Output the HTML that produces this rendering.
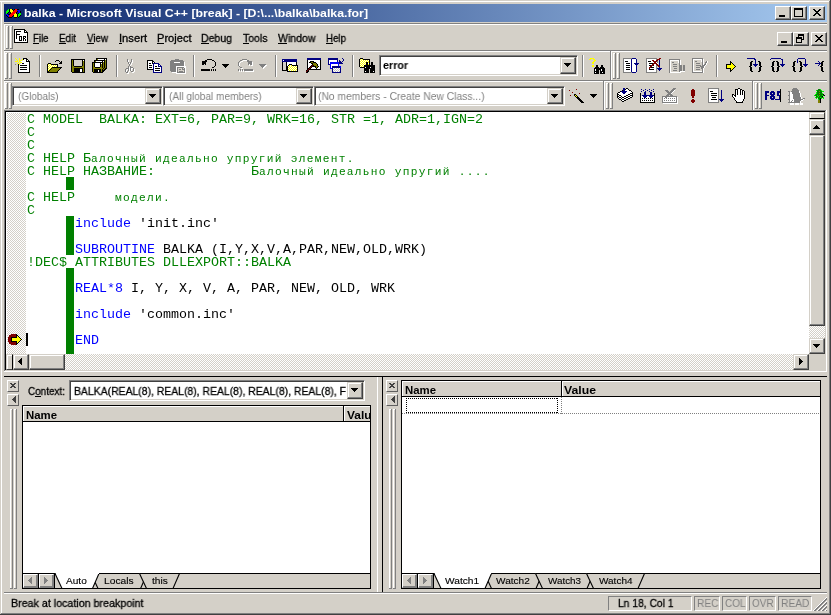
<!DOCTYPE html>
<html><head><meta charset="utf-8"><title>balka - Microsoft Visual C++</title>
<style>
*{box-sizing:border-box;margin:0;padding:0}
html,body{width:831px;height:615px;overflow:hidden;background:#d4d0c8}
body{position:relative;font-family:"Liberation Sans",sans-serif;font-size:11px;color:#000}
.a{position:absolute}
.hl{position:absolute;height:1px}
.vl{position:absolute;width:1px}
.t{position:absolute;white-space:pre;line-height:13px;height:13px;transform-origin:0 0;will-change:transform}
.btn{position:absolute;background:#d4d0c8;border:1px solid;border-color:#fff #404040 #404040 #fff;box-shadow:inset -1px -1px #808080,inset 1px 1px #d4d0c8}
.sbtn{position:absolute;background:#d4d0c8;border:1px solid;border-color:#d4d0c8 #404040 #404040 #d4d0c8;box-shadow:inset -1px -1px #808080,inset 1px 1px #fff}
.sunk{position:absolute;border:1px solid;border-color:#808080 #fff #fff #808080;box-shadow:inset 1px 1px #404040,inset -1px -1px #d4d0c8;background:#fff}
.dith{background:repeating-conic-gradient(#d4d0c8 0 25%,#fff 0 50%) 0 0/2px 2px}
.dith2{background:repeating-conic-gradient(#fff 0 25%,#d4d0c8 0 50%) 0 0/2px 2px}
.code{position:absolute;font-family:"Liberation Mono",monospace;font-size:13.333px;line-height:13px;height:13px;white-space:pre;will-change:transform}
.g{color:#008000}.b{color:#0000ff}
.cy{font-size:11.2px;letter-spacing:1.279px}
svg{position:absolute;shape-rendering:crispEdges;overflow:visible}
</style></head>
<body>
<div class="hl" style="left:0px;top:1px;width:830px;background:#ffffff"></div>
<div class="vl" style="left:1px;top:1px;height:613px;background:#ffffff"></div>
<div class="hl" style="left:1px;top:613px;width:829px;background:#808080"></div>
<div class="vl" style="left:829px;top:1px;height:613px;background:#808080"></div>
<div class="hl" style="left:0px;top:614px;width:831px;background:#404040"></div>
<div class="vl" style="left:830px;top:0px;height:615px;background:#404040"></div>
<div class="a" style="left:4px;top:4px;width:823px;height:18px;background:linear-gradient(to right,#0a246a,#a6caf0);"></div>
<svg style="left:6px;top:9px" width="15" height="9" viewBox="0 0 15 9"><path fill="#00ff00" d="M2 0h1v1h-1zM1 1h2v1h-2zM0 2h3v1h-3zM0 3h2v1h-2zM0 4h1v1h-1zM13 4h2v1h-2zM12 5h3v1h-3zM12 6h2v1h-2zM12 7h1v1h-1z"/><path fill="#000000" d="M3 0h1v1h-1zM6 0h1v1h-1zM8 0h1v1h-1zM11 0h2v1h-2zM3 1h1v1h-1zM7 1h1v1h-1zM3 2h1v1h-1zM11 2h1v1h-1zM14 2h1v1h-1zM2 3h1v1h-1zM4 3h1v1h-1zM10 3h1v1h-1zM14 3h1v1h-1zM1 4h1v1h-1zM4 4h1v1h-1zM10 4h1v1h-1zM12 4h1v1h-1zM2 5h2v1h-2zM11 5h1v1h-1zM0 6h1v1h-1zM7 6h1v1h-1zM11 6h1v1h-1zM14 6h1v1h-1zM1 7h1v1h-1zM6 7h1v1h-1zM11 7h1v1h-1zM13 7h1v1h-1zM2 8h4v1h-4zM8 8h3v1h-3zM12 8h1v1h-1z"/><path fill="#ffff00" d="M4 0h2v1h-2zM4 1h3v1h-3zM4 2h3v1h-3zM5 3h1v1h-1zM9 4h1v1h-1zM8 5h3v1h-3zM8 6h3v1h-3zM8 7h3v1h-3z"/><path fill="#ff0000" d="M9 0h2v1h-2zM8 1h3v1h-3zM7 2h4v1h-4zM6 3h4v1h-4zM5 4h4v1h-4zM4 5h4v1h-4zM3 6h4v1h-4zM3 7h3v1h-3z"/><path fill="#0000ff" d="M11 1h3v1h-3zM12 2h2v1h-2zM12 3h2v1h-2zM0 5h2v1h-2zM1 6h2v1h-2zM2 7h1v1h-1z"/></svg>
<div class="t" style="left:24.00px;top:6px;font-family:'Liberation Sans';font-size:11px;color:#fff;line-height:14px;height:14px;transform:scaleX(1.1195);font-weight:bold;">balka - Microsoft Visual C++ [break] - [D:\...\balka\balka.for]</div>
<div class="btn" style="left:775px;top:6px;width:16px;height:14px"></div>
<svg style="left:775px;top:6px" width="16" height="11" viewBox="0 0 16 11"><path fill="#000000" d="M4 9h6v1h-6zM4 10h6v1h-6z"/></svg>
<div class="btn" style="left:791px;top:6px;width:16px;height:14px"></div>
<svg style="left:791px;top:6px" width="16" height="11" viewBox="0 0 16 11"><path fill="#000000" d="M3 2h9v1h-9zM3 3h9v1h-9zM3 4h1v1h-1zM11 4h1v1h-1zM3 5h1v1h-1zM11 5h1v1h-1zM3 6h1v1h-1zM11 6h1v1h-1zM3 7h1v1h-1zM11 7h1v1h-1zM3 8h1v1h-1zM11 8h1v1h-1zM3 9h1v1h-1zM11 9h1v1h-1zM3 10h9v1h-9z"/></svg>
<div class="btn" style="left:809px;top:6px;width:16px;height:14px"></div>
<svg style="left:809px;top:6px" width="16" height="10" viewBox="0 0 16 10"><path fill="#000000" d="M4 3h2v1h-2zM10 3h2v1h-2zM5 4h2v1h-2zM9 4h2v1h-2zM6 5h4v1h-4zM7 6h2v1h-2zM6 7h4v1h-4zM5 8h2v1h-2zM9 8h2v1h-2zM4 9h2v1h-2zM10 9h2v1h-2z"/></svg>
<div class="hl" style="left:4px;top:23px;width:823px;background:#808080"></div>
<div class="hl" style="left:4px;top:24px;width:823px;background:#ffffff"></div>
<div class="vl" style="left:4px;top:24px;height:85px;background:#ffffff"></div>
<div class="vl" style="left:6px;top:26px;height:23px;background:#ffffff"></div>
<div class="vl" style="left:7px;top:26px;height:23px;background:#d4d0c8"></div>
<div class="vl" style="left:8px;top:26px;height:23px;background:#808080"></div>
<div class="hl" style="left:6px;top:26px;width:2px;background:#ffffff"></div>
<div class="hl" style="left:6px;top:48px;width:3px;background:#808080"></div>
<div class="vl" style="left:10px;top:26px;height:23px;background:#ffffff"></div>
<div class="vl" style="left:11px;top:26px;height:23px;background:#d4d0c8"></div>
<div class="vl" style="left:12px;top:26px;height:23px;background:#808080"></div>
<div class="hl" style="left:10px;top:26px;width:2px;background:#ffffff"></div>
<div class="hl" style="left:10px;top:48px;width:3px;background:#808080"></div>
<svg style="left:14px;top:29px" width="14" height="14" viewBox="0 0 14 14"><path fill="#000000" d="M0 0h11v1h-11zM0 1h1v1h-1zM10 1h2v1h-2zM0 2h1v1h-1zM2 2h5v1h-5zM10 2h1v1h-1zM12 2h1v1h-1zM0 3h1v1h-1zM2 3h1v1h-1zM10 3h4v1h-4zM0 4h1v1h-1zM2 4h1v1h-1zM13 4h1v1h-1zM0 5h1v1h-1zM2 5h4v1h-4zM13 5h1v1h-1zM0 6h1v1h-1zM2 6h1v1h-1zM13 6h1v1h-1zM0 7h1v1h-1zM2 7h1v1h-1zM5 7h3v1h-3zM9 7h3v1h-3zM13 7h1v1h-1zM0 8h1v1h-1zM2 8h1v1h-1zM5 8h1v1h-1zM7 8h1v1h-1zM9 8h1v1h-1zM11 8h1v1h-1zM13 8h1v1h-1zM0 9h1v1h-1zM2 9h1v1h-1zM5 9h1v1h-1zM7 9h1v1h-1zM9 9h2v1h-2zM13 9h1v1h-1zM0 10h1v1h-1zM5 10h1v1h-1zM7 10h1v1h-1zM9 10h1v1h-1zM11 10h1v1h-1zM13 10h1v1h-1zM0 11h1v1h-1zM5 11h3v1h-3zM9 11h1v1h-1zM11 11h1v1h-1zM13 11h1v1h-1zM0 12h1v1h-1zM13 12h1v1h-1zM0 13h14v1h-14z"/><path fill="#ffffff" d="M1 1h9v1h-9zM1 2h1v1h-1zM7 2h3v1h-3zM11 2h1v1h-1zM1 3h1v1h-1zM3 3h7v1h-7zM1 4h1v1h-1zM3 4h10v1h-10zM1 5h1v1h-1zM6 5h7v1h-7zM1 6h1v1h-1zM3 6h10v1h-10zM1 7h1v1h-1zM3 7h2v1h-2zM8 7h1v1h-1zM12 7h1v1h-1zM1 8h1v1h-1zM3 8h2v1h-2zM6 8h1v1h-1zM8 8h1v1h-1zM10 8h1v1h-1zM12 8h1v1h-1zM1 9h1v1h-1zM3 9h2v1h-2zM6 9h1v1h-1zM8 9h1v1h-1zM11 9h2v1h-2zM1 10h4v1h-4zM6 10h1v1h-1zM8 10h1v1h-1zM10 10h1v1h-1zM12 10h1v1h-1zM1 11h4v1h-4zM8 11h1v1h-1zM10 11h1v1h-1zM12 11h1v1h-1zM1 12h12v1h-12z"/></svg>
<div class="t" style="left:33.00px;top:32px;font-family:'Liberation Sans';font-size:11px;color:#000;line-height:13px;height:13px;transform:scaleX(0.8739);-webkit-text-stroke:0.3px;">File</div>
<div class="hl" style="left:33px;top:43px;width:6px;background:#000"></div>
<div class="t" style="left:59.00px;top:32px;font-family:'Liberation Sans';font-size:11px;color:#000;line-height:13px;height:13px;transform:scaleX(0.8972);-webkit-text-stroke:0.3px;">Edit</div>
<div class="hl" style="left:59px;top:43px;width:7px;background:#000"></div>
<div class="t" style="left:87.00px;top:32px;font-family:'Liberation Sans';font-size:11px;color:#000;line-height:13px;height:13px;transform:scaleX(0.8869);-webkit-text-stroke:0.3px;">View</div>
<div class="hl" style="left:87px;top:43px;width:7px;background:#000"></div>
<div class="t" style="left:119.00px;top:32px;font-family:'Liberation Sans';font-size:11px;color:#000;line-height:13px;height:13px;transform:scaleX(1.0182);-webkit-text-stroke:0.3px;">Insert</div>
<div class="hl" style="left:119px;top:43px;width:3px;background:#000"></div>
<div class="t" style="left:157.00px;top:32px;font-family:'Liberation Sans';font-size:11px;color:#000;line-height:13px;height:13px;transform:scaleX(1.0077);-webkit-text-stroke:0.3px;">Project</div>
<div class="hl" style="left:157px;top:43px;width:7px;background:#000"></div>
<div class="t" style="left:201.00px;top:32px;font-family:'Liberation Sans';font-size:11px;color:#000;line-height:13px;height:13px;transform:scaleX(0.9561);-webkit-text-stroke:0.3px;">Debug</div>
<div class="hl" style="left:201px;top:43px;width:8px;background:#000"></div>
<div class="t" style="left:243.00px;top:32px;font-family:'Liberation Sans';font-size:11px;color:#000;line-height:13px;height:13px;transform:scaleX(0.9539);-webkit-text-stroke:0.3px;">Tools</div>
<div class="hl" style="left:243px;top:43px;width:6px;background:#000"></div>
<div class="t" style="left:277.50px;top:32px;font-family:'Liberation Sans';font-size:11px;color:#000;line-height:13px;height:13px;transform:scaleX(0.9576);-webkit-text-stroke:0.3px;">Window</div>
<div class="hl" style="left:278px;top:43px;width:9px;background:#000"></div>
<div class="t" style="left:326.00px;top:32px;font-family:'Liberation Sans';font-size:11px;color:#000;line-height:13px;height:13px;transform:scaleX(0.8837);-webkit-text-stroke:0.3px;">Help</div>
<div class="hl" style="left:326px;top:43px;width:7px;background:#000"></div>
<div class="btn" style="left:777px;top:32px;width:16px;height:14px"></div>
<svg style="left:777px;top:32px" width="16" height="11" viewBox="0 0 16 11"><path fill="#000000" d="M4 9h6v1h-6zM4 10h6v1h-6z"/></svg>
<div class="btn" style="left:793px;top:32px;width:16px;height:14px"></div>
<svg style="left:793px;top:32px" width="16" height="11" viewBox="0 0 16 11"><path fill="#000000" d="M5 2h6v1h-6zM5 3h6v1h-6zM5 4h1v1h-1zM10 4h1v1h-1zM3 5h6v1h-6zM10 5h1v1h-1zM3 6h6v1h-6zM10 6h1v1h-1zM3 7h1v1h-1zM8 7h3v1h-3zM3 8h1v1h-1zM8 8h1v1h-1zM3 9h1v1h-1zM8 9h1v1h-1zM3 10h6v1h-6z"/></svg>
<div class="btn" style="left:811px;top:32px;width:16px;height:14px"></div>
<svg style="left:811px;top:32px" width="16" height="10" viewBox="0 0 16 10"><path fill="#000000" d="M4 3h2v1h-2zM10 3h2v1h-2zM5 4h2v1h-2zM9 4h2v1h-2zM6 5h4v1h-4zM7 6h2v1h-2zM6 7h4v1h-4zM5 8h2v1h-2zM9 8h2v1h-2zM4 9h2v1h-2zM10 9h2v1h-2z"/></svg>
<div class="hl" style="left:4px;top:50px;width:823px;background:#808080"></div>
<div class="hl" style="left:4px;top:51px;width:823px;background:#ffffff"></div>
<div class="vl" style="left:5px;top:53px;height:26px;background:#ffffff"></div>
<div class="vl" style="left:6px;top:53px;height:26px;background:#d4d0c8"></div>
<div class="vl" style="left:7px;top:53px;height:26px;background:#808080"></div>
<div class="hl" style="left:5px;top:53px;width:2px;background:#ffffff"></div>
<div class="hl" style="left:5px;top:78px;width:3px;background:#808080"></div>
<div class="vl" style="left:9px;top:53px;height:26px;background:#ffffff"></div>
<div class="vl" style="left:10px;top:53px;height:26px;background:#d4d0c8"></div>
<div class="vl" style="left:11px;top:53px;height:26px;background:#808080"></div>
<div class="hl" style="left:9px;top:53px;width:2px;background:#ffffff"></div>
<div class="hl" style="left:9px;top:78px;width:3px;background:#808080"></div>
<svg style="left:15px;top:58px" width="16" height="15" viewBox="0 0 16 15"><path fill="#ffff00" d="M0 0h1v1h-1zM4 0h1v1h-1zM1 1h1v1h-1zM4 1h1v1h-1zM7 1h1v1h-1zM2 2h1v1h-1zM4 2h3v1h-3zM0 3h3v1h-3zM4 3h1v1h-1zM3 4h1v1h-1zM5 4h2v1h-2zM2 5h1v1h-1zM4 5h1v1h-1zM4 6h1v1h-1z"/><path fill="#000000" d="M8 0h4v1h-4zM8 1h1v1h-1zM11 1h2v1h-2zM11 2h1v1h-1zM13 2h1v1h-1zM11 3h4v1h-4zM14 4h1v1h-1zM7 5h2v1h-2zM14 5h1v1h-1zM3 6h1v1h-1zM14 6h1v1h-1zM3 7h1v1h-1zM5 7h7v1h-7zM14 7h1v1h-1zM3 8h1v1h-1zM14 8h1v1h-1zM3 9h1v1h-1zM5 9h7v1h-7zM14 9h1v1h-1zM3 10h1v1h-1zM14 10h1v1h-1zM3 11h1v1h-1zM5 11h7v1h-7zM14 11h1v1h-1zM3 12h1v1h-1zM14 12h1v1h-1zM3 13h1v1h-1zM14 13h1v1h-1zM3 14h12v1h-12z"/><path fill="#ffffff" d="M9 1h2v1h-2zM8 2h3v1h-3zM12 2h1v1h-1zM6 3h5v1h-5zM7 4h7v1h-7zM6 5h1v1h-1zM9 5h5v1h-5zM5 6h9v1h-9zM4 7h1v1h-1zM12 7h2v1h-2zM4 8h10v1h-10zM4 9h1v1h-1zM12 9h2v1h-2zM4 10h10v1h-10zM4 11h1v1h-1zM12 11h2v1h-2zM4 12h10v1h-10zM4 13h10v1h-10z"/><path fill="#808080" d="M0 6h1v1h-1z"/></svg>
<svg style="left:47px;top:58px" width="16" height="15" viewBox="0 0 16 15"><path fill="#000000" d="M9 2h3v1h-3zM8 3h1v1h-1zM12 3h1v1h-1zM14 3h1v1h-1zM13 4h2v1h-2zM1 5h3v1h-3zM12 5h3v1h-3zM0 6h1v1h-1zM4 6h7v1h-7zM0 7h1v1h-1zM10 7h1v1h-1zM0 8h1v1h-1zM10 8h1v1h-1zM0 9h1v1h-1zM5 9h10v1h-10zM0 10h1v1h-1zM4 10h1v1h-1zM13 10h1v1h-1zM0 11h1v1h-1zM3 11h1v1h-1zM12 11h1v1h-1zM0 12h1v1h-1zM2 12h1v1h-1zM11 12h1v1h-1zM0 13h2v1h-2zM10 13h1v1h-1zM0 14h11v1h-11z"/><path fill="#ffff00" d="M1 6h1v1h-1zM3 6h1v1h-1zM2 7h1v1h-1zM4 7h1v1h-1zM6 7h1v1h-1zM8 7h1v1h-1zM1 8h1v1h-1zM3 8h1v1h-1zM5 8h1v1h-1zM7 8h1v1h-1zM9 8h1v1h-1zM2 9h1v1h-1zM4 9h1v1h-1zM1 10h1v1h-1zM3 10h1v1h-1zM2 11h1v1h-1zM1 12h1v1h-1z"/><path fill="#ffffff" d="M2 6h1v1h-1zM1 7h1v1h-1zM3 7h1v1h-1zM5 7h1v1h-1zM7 7h1v1h-1zM9 7h1v1h-1zM2 8h1v1h-1zM4 8h1v1h-1zM6 8h1v1h-1zM8 8h1v1h-1zM1 9h1v1h-1zM3 9h1v1h-1zM2 10h1v1h-1zM1 11h1v1h-1z"/><path fill="#808000" d="M5 10h8v1h-8zM4 11h8v1h-8zM3 12h8v1h-8zM2 13h8v1h-8z"/></svg>
<svg style="left:71px;top:58px" width="16" height="15" viewBox="0 0 16 15"><path fill="#000000" d="M0 1h14v1h-14zM0 2h1v1h-1zM2 2h1v1h-1zM11 2h1v1h-1zM13 2h1v1h-1zM0 3h1v1h-1zM2 3h1v1h-1zM11 3h1v1h-1zM13 3h1v1h-1zM0 4h1v1h-1zM2 4h1v1h-1zM11 4h1v1h-1zM13 4h1v1h-1zM0 5h1v1h-1zM2 5h1v1h-1zM11 5h1v1h-1zM13 5h1v1h-1zM0 6h1v1h-1zM2 6h1v1h-1zM11 6h1v1h-1zM13 6h1v1h-1zM0 7h1v1h-1zM2 7h1v1h-1zM11 7h1v1h-1zM13 7h1v1h-1zM0 8h1v1h-1zM3 8h8v1h-8zM13 8h1v1h-1zM0 9h1v1h-1zM13 9h1v1h-1zM0 10h1v1h-1zM3 10h9v1h-9zM13 10h1v1h-1zM0 11h1v1h-1zM3 11h6v1h-6zM11 11h1v1h-1zM13 11h1v1h-1zM0 12h1v1h-1zM3 12h6v1h-6zM11 12h1v1h-1zM13 12h1v1h-1zM0 13h1v1h-1zM3 13h6v1h-6zM11 13h1v1h-1zM13 13h1v1h-1zM1 14h13v1h-13z"/><path fill="#808000" d="M1 2h1v1h-1zM1 3h1v1h-1zM12 3h1v1h-1zM1 4h1v1h-1zM12 4h1v1h-1zM1 5h1v1h-1zM12 5h1v1h-1zM1 6h1v1h-1zM12 6h1v1h-1zM1 7h1v1h-1zM12 7h1v1h-1zM1 8h2v1h-2zM11 8h2v1h-2zM1 9h12v1h-12zM1 10h2v1h-2zM12 10h1v1h-1zM1 11h2v1h-2zM12 11h1v1h-1zM1 12h2v1h-2zM12 12h1v1h-1zM1 13h2v1h-2zM12 13h1v1h-1z"/><path fill="#d4d0c8" d="M3 2h8v1h-8zM3 3h8v1h-8zM3 4h8v1h-8zM3 5h8v1h-8zM3 6h8v1h-8zM3 7h8v1h-8z"/><path fill="#ffffff" d="M12 2h1v1h-1zM9 11h2v1h-2zM9 12h2v1h-2zM9 13h2v1h-2z"/></svg>
<svg style="left:92px;top:58px" width="16" height="15" viewBox="0 0 16 15"><path fill="#000000" d="M4 0h11v1h-11zM4 1h1v1h-1zM12 1h1v1h-1zM14 1h1v1h-1zM2 2h11v1h-11zM14 2h1v1h-1zM2 3h1v1h-1zM10 3h1v1h-1zM12 3h1v1h-1zM14 3h1v1h-1zM0 4h11v1h-11zM12 4h1v1h-1zM14 4h1v1h-1zM0 5h1v1h-1zM2 5h1v1h-1zM8 5h1v1h-1zM10 5h1v1h-1zM12 5h1v1h-1zM14 5h1v1h-1zM0 6h1v1h-1zM2 6h1v1h-1zM8 6h1v1h-1zM10 6h1v1h-1zM12 6h1v1h-1zM14 6h1v1h-1zM0 7h1v1h-1zM2 7h1v1h-1zM8 7h1v1h-1zM10 7h1v1h-1zM12 7h1v1h-1zM14 7h1v1h-1zM0 8h1v1h-1zM2 8h1v1h-1zM8 8h1v1h-1zM10 8h1v1h-1zM12 8h1v1h-1zM14 8h1v1h-1zM0 9h1v1h-1zM3 9h5v1h-5zM10 9h1v1h-1zM12 9h1v1h-1zM14 9h1v1h-1zM0 10h1v1h-1zM11 10h1v1h-1zM13 10h2v1h-2zM0 11h1v1h-1zM2 11h7v1h-7zM10 11h1v1h-1zM12 11h2v1h-2zM0 12h1v1h-1zM2 12h4v1h-4zM7 12h2v1h-2zM10 12h3v1h-3zM0 13h1v1h-1zM2 13h4v1h-4zM7 13h2v1h-2zM10 13h2v1h-2zM1 14h10v1h-10z"/><path fill="#808000" d="M5 1h1v1h-1zM13 2h1v1h-1zM3 3h1v1h-1zM13 3h1v1h-1zM11 4h1v1h-1zM13 4h1v1h-1zM1 5h1v1h-1zM11 5h1v1h-1zM13 5h1v1h-1zM1 6h1v1h-1zM9 6h1v1h-1zM11 6h1v1h-1zM13 6h1v1h-1zM1 7h1v1h-1zM9 7h1v1h-1zM11 7h1v1h-1zM13 7h1v1h-1zM1 8h1v1h-1zM9 8h1v1h-1zM11 8h1v1h-1zM13 8h1v1h-1zM1 9h2v1h-2zM8 9h2v1h-2zM11 9h1v1h-1zM13 9h1v1h-1zM1 10h10v1h-10zM12 10h1v1h-1zM1 11h1v1h-1zM9 11h1v1h-1zM11 11h1v1h-1zM1 12h1v1h-1zM9 12h1v1h-1zM1 13h1v1h-1zM9 13h1v1h-1z"/><path fill="#ffffff" d="M6 1h6v1h-6zM13 1h1v1h-1zM4 3h6v1h-6zM11 3h1v1h-1zM3 5h5v1h-5zM9 5h1v1h-1zM3 6h5v1h-5zM3 7h5v1h-5zM3 8h5v1h-5zM6 12h1v1h-1zM6 13h1v1h-1z"/></svg>
<svg style="left:124px;top:59px" width="13" height="15" viewBox="0 0 13 15"><path fill="#808080" d="M3 0h1v1h-1zM7 0h1v1h-1zM3 1h1v1h-1zM7 1h1v1h-1zM3 2h1v1h-1zM7 2h1v1h-1zM4 3h1v1h-1zM6 3h1v1h-1zM4 4h1v1h-1zM6 4h1v1h-1zM5 5h1v1h-1zM5 6h1v1h-1zM4 7h1v1h-1zM6 7h1v1h-1zM4 8h1v1h-1zM6 8h3v1h-3zM2 9h3v1h-3zM6 9h1v1h-1zM9 9h1v1h-1zM1 10h1v1h-1zM4 10h1v1h-1zM6 10h1v1h-1zM9 10h1v1h-1zM1 11h1v1h-1zM4 11h1v1h-1zM6 11h1v1h-1zM9 11h1v1h-1zM1 12h1v1h-1zM3 12h1v1h-1zM7 12h2v1h-2zM2 13h2v1h-2z"/><path fill="#ffffff" d="M4 1h1v1h-1zM8 1h1v1h-1zM4 2h1v1h-1zM8 2h1v1h-1zM8 3h1v1h-1zM5 4h1v1h-1zM7 4h1v1h-1zM7 5h1v1h-1zM6 6h1v1h-1zM5 8h1v1h-1zM5 9h1v1h-1zM7 9h2v1h-2zM3 10h1v1h-1zM5 10h1v1h-1zM7 10h1v1h-1zM10 10h1v1h-1zM2 11h1v1h-1zM5 11h1v1h-1zM7 11h1v1h-1zM10 11h1v1h-1zM2 12h1v1h-1zM5 12h1v1h-1zM10 12h1v1h-1zM4 13h1v1h-1zM8 13h2v1h-2zM3 14h2v1h-2z"/></svg>
<svg style="left:147px;top:58px" width="16" height="15" viewBox="0 0 16 15"><path fill="#000000" d="M0 2h6v1h-6zM0 3h1v1h-1zM5 3h2v1h-2zM0 4h1v1h-1zM5 4h1v1h-1zM7 4h1v1h-1zM0 5h1v1h-1zM2 5h2v1h-2zM5 5h1v1h-1zM0 6h1v1h-1zM0 7h1v1h-1zM2 7h3v1h-3zM0 8h1v1h-1zM8 8h2v1h-2zM0 9h1v1h-1zM2 9h3v1h-3zM0 10h1v1h-1zM8 10h5v1h-5zM0 11h6v1h-6zM8 12h5v1h-5z"/><path fill="#ffffff" d="M1 3h4v1h-4zM1 4h4v1h-4zM6 4h1v1h-1zM1 5h1v1h-1zM4 5h1v1h-1zM1 6h5v1h-5zM7 6h4v1h-4zM1 7h1v1h-1zM5 7h1v1h-1zM7 7h4v1h-4zM12 7h1v1h-1zM1 8h5v1h-5zM7 8h1v1h-1zM10 8h1v1h-1zM1 9h1v1h-1zM5 9h1v1h-1zM7 9h7v1h-7zM1 10h5v1h-5zM7 10h1v1h-1zM13 10h1v1h-1zM7 11h7v1h-7zM7 12h1v1h-1zM13 12h1v1h-1zM7 13h7v1h-7z"/><path fill="#000080" d="M6 5h6v1h-6zM6 6h1v1h-1zM11 6h2v1h-2zM6 7h1v1h-1zM11 7h1v1h-1zM13 7h1v1h-1zM6 8h1v1h-1zM11 8h4v1h-4zM6 9h1v1h-1zM14 9h1v1h-1zM6 10h1v1h-1zM14 10h1v1h-1zM6 11h1v1h-1zM14 11h1v1h-1zM6 12h1v1h-1zM14 12h1v1h-1zM6 13h1v1h-1zM14 13h1v1h-1zM6 14h9v1h-9z"/></svg>
<svg style="left:170px;top:58px" width="16" height="16" viewBox="0 0 16 16"><path fill="#808080" d="M5 1h4v1h-4zM1 2h12v1h-12zM0 3h14v1h-14zM0 4h4v1h-4zM10 4h4v1h-4zM0 5h14v1h-14zM0 6h14v1h-14zM0 7h14v1h-14zM0 8h6v1h-6zM0 9h6v1h-6zM7 9h7v1h-7zM0 10h6v1h-6zM7 10h1v1h-1zM12 10h1v1h-1zM14 10h1v1h-1zM0 11h6v1h-6zM7 11h1v1h-1zM9 11h2v1h-2zM12 11h3v1h-3zM0 12h6v1h-6zM7 12h1v1h-1zM14 12h1v1h-1zM1 13h5v1h-5zM7 13h1v1h-1zM9 13h4v1h-4zM14 13h1v1h-1zM7 14h8v1h-8z"/><path fill="#ffffff" d="M4 4h6v1h-6zM14 4h1v1h-1zM14 5h1v1h-1zM14 6h1v1h-1zM14 7h1v1h-1zM6 8h10v1h-10zM6 9h1v1h-1zM14 9h2v1h-2zM6 10h1v1h-1zM15 10h1v1h-1zM6 11h1v1h-1zM15 11h1v1h-1zM6 12h1v1h-1zM15 12h1v1h-1zM6 13h1v1h-1zM15 13h1v1h-1zM2 14h5v1h-5zM15 14h1v1h-1zM6 15h10v1h-10z"/><path fill="#d4d0c8" d="M8 10h4v1h-4zM13 10h1v1h-1zM8 11h1v1h-1zM11 11h1v1h-1zM8 12h6v1h-6zM8 13h1v1h-1zM13 13h1v1h-1z"/></svg>
<svg style="left:201px;top:58px" width="16" height="13" viewBox="0 0 16 13"><path fill="#000000" d="M6 1h5v1h-5zM4 2h2v1h-2zM11 2h2v1h-2zM1 3h5v1h-5zM13 3h1v1h-1zM1 4h4v1h-4zM14 4h1v1h-1zM1 5h4v1h-4zM14 5h1v1h-1zM1 6h2v1h-2zM4 6h1v1h-1zM14 6h1v1h-1zM14 7h1v1h-1zM13 8h1v1h-1zM11 9h2v1h-2zM0 11h9v1h-9zM10 11h1v1h-1zM12 11h1v1h-1zM14 11h1v1h-1zM0 12h9v1h-9zM10 12h1v1h-1zM12 12h1v1h-1zM14 12h1v1h-1z"/></svg>
<svg style="left:237px;top:58px" width="17" height="14" viewBox="0 0 17 14"><path fill="#808080" d="M5 1h5v1h-5zM3 2h2v1h-2zM10 2h2v1h-2zM2 3h1v1h-1zM10 3h5v1h-5zM1 4h1v1h-1zM11 4h4v1h-4zM1 5h1v1h-1zM11 5h4v1h-4zM1 6h1v1h-1zM11 6h1v1h-1zM13 6h2v1h-2zM1 7h1v1h-1zM2 8h1v1h-1zM3 9h2v1h-2zM1 11h1v1h-1zM3 11h1v1h-1zM5 11h1v1h-1zM7 11h9v1h-9zM1 12h1v1h-1zM3 12h1v1h-1zM5 12h1v1h-1zM7 12h9v1h-9z"/><path fill="#ffffff" d="M6 2h4v1h-4zM4 3h2v1h-2zM3 4h1v1h-1zM15 4h1v1h-1zM2 5h1v1h-1zM15 5h1v1h-1zM2 6h1v1h-1zM12 6h1v1h-1zM15 6h1v1h-1zM2 7h1v1h-1zM12 7h1v1h-1zM14 7h2v1h-2zM4 10h2v1h-2zM2 12h1v1h-1zM4 12h1v1h-1zM6 12h1v1h-1zM16 12h1v1h-1zM2 13h1v1h-1zM4 13h1v1h-1zM6 13h1v1h-1zM8 13h9v1h-9z"/></svg>
<svg style="left:282px;top:58px" width="16" height="14" viewBox="0 0 16 14"><path fill="#000080" d="M0 1h15v1h-15zM0 2h1v1h-1zM2 2h13v1h-13zM0 3h15v1h-15z"/><path fill="#ffffff" d="M1 2h1v1h-1zM5 4h9v1h-9zM5 5h9v1h-9zM5 6h2v1h-2zM10 6h4v1h-4zM5 7h1v1h-1zM8 7h1v1h-1zM6 8h1v1h-1zM8 8h1v1h-1zM10 8h1v1h-1zM12 8h1v1h-1zM14 8h1v1h-1zM7 9h1v1h-1zM9 9h1v1h-1zM11 9h1v1h-1zM13 9h1v1h-1zM6 10h1v1h-1zM8 10h1v1h-1zM10 10h1v1h-1zM12 10h1v1h-1zM14 10h1v1h-1zM7 11h1v1h-1zM9 11h1v1h-1zM11 11h1v1h-1zM13 11h1v1h-1zM6 12h1v1h-1zM8 12h1v1h-1zM10 12h1v1h-1zM12 12h1v1h-1zM14 12h1v1h-1z"/><path fill="#000000" d="M0 4h1v1h-1zM4 4h1v1h-1zM14 4h1v1h-1zM0 5h1v1h-1zM4 5h1v1h-1zM14 5h1v1h-1zM0 6h1v1h-1zM4 6h1v1h-1zM7 6h3v1h-3zM14 6h1v1h-1zM0 7h1v1h-1zM4 7h1v1h-1zM6 7h1v1h-1zM10 7h6v1h-6zM0 8h1v1h-1zM4 8h2v1h-2zM15 8h1v1h-1zM0 9h1v1h-1zM4 9h2v1h-2zM15 9h1v1h-1zM0 10h1v1h-1zM4 10h2v1h-2zM15 10h1v1h-1zM0 11h1v1h-1zM4 11h2v1h-2zM15 11h1v1h-1zM0 12h6v1h-6zM15 12h1v1h-1zM5 13h11v1h-11z"/><path fill="#d4d0c8" d="M1 4h3v1h-3zM1 5h3v1h-3zM1 6h3v1h-3zM1 7h3v1h-3zM1 8h3v1h-3zM1 9h3v1h-3zM1 10h3v1h-3zM1 11h3v1h-3z"/><path fill="#ffff00" d="M7 7h1v1h-1zM9 7h1v1h-1zM7 8h1v1h-1zM9 8h1v1h-1zM11 8h1v1h-1zM13 8h1v1h-1zM6 9h1v1h-1zM8 9h1v1h-1zM10 9h1v1h-1zM12 9h1v1h-1zM14 9h1v1h-1zM7 10h1v1h-1zM9 10h1v1h-1zM11 10h1v1h-1zM13 10h1v1h-1zM6 11h1v1h-1zM8 11h1v1h-1zM10 11h1v1h-1zM12 11h1v1h-1zM14 11h1v1h-1zM7 12h1v1h-1zM9 12h1v1h-1zM11 12h1v1h-1zM13 12h1v1h-1z"/></svg>
<svg style="left:306px;top:58px" width="16" height="15" viewBox="0 0 16 15"><path fill="#000080" d="M1 0h14v1h-14zM1 1h14v1h-14z"/><path fill="#000000" d="M1 2h1v1h-1zM14 2h1v1h-1zM1 3h1v1h-1zM4 3h4v1h-4zM14 3h1v1h-1zM1 4h1v1h-1zM3 4h2v1h-2zM7 4h3v1h-3zM14 4h1v1h-1zM1 5h1v1h-1zM5 5h2v1h-2zM10 5h1v1h-1zM14 5h1v1h-1zM1 6h1v1h-1zM6 6h1v1h-1zM11 6h1v1h-1zM14 6h1v1h-1zM1 7h1v1h-1zM5 7h1v1h-1zM7 7h1v1h-1zM11 7h1v1h-1zM14 7h1v1h-1zM1 8h1v1h-1zM4 8h1v1h-1zM6 8h4v1h-4zM12 8h1v1h-1zM14 8h1v1h-1zM1 9h1v1h-1zM3 9h1v1h-1zM5 9h1v1h-1zM9 9h1v1h-1zM11 9h1v1h-1zM14 9h1v1h-1zM1 10h2v1h-2zM4 10h1v1h-1zM10 10h1v1h-1zM14 10h1v1h-1zM1 11h1v1h-1zM3 11h12v1h-12zM0 12h1v1h-1zM2 12h1v1h-1zM1 13h2v1h-2zM0 14h2v1h-2z"/><path fill="#ffffff" d="M2 2h12v1h-12zM2 3h2v1h-2zM8 3h6v1h-6zM2 4h1v1h-1zM10 4h4v1h-4zM2 5h3v1h-3zM11 5h3v1h-3zM2 6h4v1h-4zM12 6h2v1h-2zM2 7h3v1h-3zM12 7h2v1h-2zM2 8h2v1h-2zM13 8h1v1h-1zM2 9h1v1h-1zM6 9h3v1h-3zM12 9h2v1h-2zM5 10h5v1h-5zM11 10h3v1h-3z"/><path fill="#808000" d="M5 4h2v1h-2zM7 5h3v1h-3zM7 6h4v1h-4zM8 7h3v1h-3zM10 8h2v1h-2zM10 9h1v1h-1z"/><path fill="#800000" d="M6 7h1v1h-1zM5 8h1v1h-1zM4 9h1v1h-1zM3 10h1v1h-1zM2 11h1v1h-1zM1 12h1v1h-1zM0 13h1v1h-1z"/></svg>
<svg style="left:328px;top:58px" width="16" height="15" viewBox="0 0 16 15"><path fill="#000080" d="M0 0h10v1h-10zM14 0h1v1h-1zM0 1h10v1h-10zM15 1h1v1h-1zM0 2h1v1h-1zM9 2h1v1h-1zM11 2h1v1h-1zM15 2h1v1h-1zM0 3h1v1h-1zM9 3h1v1h-1zM11 3h2v1h-2zM14 3h1v1h-1zM0 4h1v1h-1zM11 4h3v1h-3zM0 5h1v1h-1zM11 5h4v1h-4zM0 6h2v1h-2zM4 8h8v1h-8zM4 9h8v1h-8zM4 10h1v1h-1zM12 10h1v1h-1zM4 11h1v1h-1zM12 11h1v1h-1zM4 12h1v1h-1zM12 12h1v1h-1zM4 13h1v1h-1zM12 13h1v1h-1zM4 14h9v1h-9z"/><path fill="#ffffff" d="M1 2h8v1h-8zM1 3h8v1h-8zM1 4h1v1h-1zM1 5h1v1h-1zM3 6h7v1h-7zM3 7h7v1h-7zM3 8h1v1h-1zM3 9h1v1h-1zM5 10h1v1h-1zM7 10h1v1h-1zM9 10h1v1h-1zM11 10h1v1h-1zM6 11h1v1h-1zM8 11h1v1h-1zM10 11h1v1h-1zM5 12h1v1h-1zM7 12h1v1h-1zM9 12h1v1h-1zM11 12h1v1h-1zM6 13h1v1h-1zM8 13h1v1h-1zM10 13h1v1h-1z"/><path fill="#0000ff" d="M2 4h9v1h-9zM2 5h9v1h-9zM2 6h1v1h-1zM10 6h1v1h-1zM2 7h1v1h-1zM10 7h1v1h-1zM2 8h1v1h-1zM12 8h1v1h-1zM2 9h1v1h-1zM12 9h1v1h-1zM2 10h2v1h-2z"/><path fill="#c0c0c0" d="M6 10h1v1h-1zM8 10h1v1h-1zM10 10h1v1h-1zM5 11h1v1h-1zM7 11h1v1h-1zM9 11h1v1h-1zM11 11h1v1h-1zM6 12h1v1h-1zM8 12h1v1h-1zM10 12h1v1h-1zM5 13h1v1h-1zM7 13h1v1h-1zM9 13h1v1h-1zM11 13h1v1h-1z"/></svg>
<svg style="left:359px;top:58px" width="16" height="15" viewBox="0 0 16 15"><path fill="#000000" d="M1 0h3v1h-3zM0 1h1v1h-1zM4 1h7v1h-7zM0 2h1v1h-1zM10 2h1v1h-1zM0 3h1v1h-1zM10 3h1v1h-1zM0 4h1v1h-1zM7 4h2v1h-2zM10 4h1v1h-1zM12 4h2v1h-2zM0 5h1v1h-1zM7 5h2v1h-2zM10 5h1v1h-1zM12 5h2v1h-2zM0 6h1v1h-1zM7 6h2v1h-2zM10 6h1v1h-1zM12 6h2v1h-2zM0 7h1v1h-1zM5 7h11v1h-11zM0 8h1v1h-1zM5 8h11v1h-11zM1 9h5v1h-5zM7 9h4v1h-4zM12 9h4v1h-4zM5 10h11v1h-11zM5 11h5v1h-5zM11 11h5v1h-5zM5 12h5v1h-5zM11 12h5v1h-5zM5 13h1v1h-1zM7 13h3v1h-3zM11 13h3v1h-3zM15 13h1v1h-1zM5 14h5v1h-5zM11 14h5v1h-5z"/><path fill="#ffff00" d="M1 1h1v1h-1zM3 1h1v1h-1zM2 2h1v1h-1zM4 2h1v1h-1zM6 2h1v1h-1zM8 2h1v1h-1zM1 3h1v1h-1zM3 3h1v1h-1zM5 3h1v1h-1zM7 3h1v1h-1zM9 3h1v1h-1zM2 4h1v1h-1zM4 4h1v1h-1zM6 4h1v1h-1zM9 4h1v1h-1zM1 5h1v1h-1zM3 5h1v1h-1zM5 5h1v1h-1zM2 6h1v1h-1zM4 6h1v1h-1zM6 6h1v1h-1zM9 6h1v1h-1zM1 7h1v1h-1zM3 7h1v1h-1zM2 8h1v1h-1zM4 8h1v1h-1z"/><path fill="#ffffff" d="M2 1h1v1h-1zM1 2h1v1h-1zM3 2h1v1h-1zM5 2h1v1h-1zM7 2h1v1h-1zM9 2h1v1h-1zM2 3h1v1h-1zM4 3h1v1h-1zM6 3h1v1h-1zM8 3h1v1h-1zM1 4h1v1h-1zM3 4h1v1h-1zM5 4h1v1h-1zM2 5h1v1h-1zM4 5h1v1h-1zM6 5h1v1h-1zM9 5h1v1h-1zM1 6h1v1h-1zM3 6h1v1h-1zM5 6h1v1h-1zM2 7h1v1h-1zM4 7h1v1h-1zM1 8h1v1h-1zM3 8h1v1h-1zM6 9h1v1h-1zM11 9h1v1h-1zM6 13h1v1h-1zM14 13h1v1h-1z"/></svg>
<div class="vl" style="left:39px;top:55px;height:22px;background:#808080"></div>
<div class="vl" style="left:40px;top:55px;height:22px;background:#ffffff"></div>
<div class="vl" style="left:116px;top:55px;height:22px;background:#808080"></div>
<div class="vl" style="left:117px;top:55px;height:22px;background:#ffffff"></div>
<div class="vl" style="left:193px;top:55px;height:22px;background:#808080"></div>
<div class="vl" style="left:194px;top:55px;height:22px;background:#ffffff"></div>
<div class="vl" style="left:275px;top:55px;height:22px;background:#808080"></div>
<div class="vl" style="left:276px;top:55px;height:22px;background:#ffffff"></div>
<div class="vl" style="left:352px;top:55px;height:22px;background:#808080"></div>
<div class="vl" style="left:353px;top:55px;height:22px;background:#ffffff"></div>
<svg style="left:222px;top:64px" width="7" height="4" viewBox="0 0 7 4"><path fill="#000000" d="M0 0h7v1h-7zM1 1h5v1h-5zM2 2h3v1h-3zM3 3h1v1h-1z"/></svg>
<svg style="left:259px;top:64px" width="8" height="5" viewBox="0 0 8 5"><path fill="#808080" d="M0 0h7v1h-7zM1 1h5v1h-5zM2 2h3v1h-3zM3 3h1v1h-1z"/><path fill="#ffffff" d="M6 1h2v1h-2zM5 2h2v1h-2zM4 3h2v1h-2zM4 4h1v1h-1z"/></svg>
<div class="sunk" style="left:379px;top:55px;width:199px;height:21px"></div>
<div class="t" style="left:383.00px;top:59px;font-family:'Liberation Sans';font-size:11px;color:#000;line-height:13px;height:13px;transform:scaleX(0.9733);font-weight:bold;">error</div>
<div class="sbtn" style="left:560px;top:57px;width:16px;height:17px"></div>
<svg style="left:564px;top:63px" width="7" height="4" viewBox="0 0 7 4"><path fill="#000000" d="M0 0h7v1h-7zM1 1h5v1h-5zM2 2h3v1h-3zM3 3h1v1h-1z"/></svg>
<div class="vl" style="left:582px;top:55px;height:22px;background:#808080"></div>
<div class="vl" style="left:583px;top:55px;height:22px;background:#ffffff"></div>
<svg style="left:589px;top:58px" width="16" height="16" viewBox="0 0 16 16"><path fill="#ffff00" d="M1 0h4v1h-4zM0 1h2v1h-2zM4 1h2v1h-2zM5 2h2v1h-2zM4 3h2v1h-2zM3 4h2v1h-2zM3 5h2v1h-2zM3 7h2v1h-2zM3 8h2v1h-2z"/><path fill="#000000" d="M7 7h2v1h-2zM12 7h2v1h-2zM7 8h2v1h-2zM12 8h2v1h-2zM6 9h4v1h-4zM11 9h4v1h-4zM5 10h11v1h-11zM5 11h1v1h-1zM7 11h5v1h-5zM13 11h3v1h-3zM5 12h1v1h-1zM7 12h3v1h-3zM11 12h1v1h-1zM13 12h3v1h-3zM5 13h5v1h-5zM11 13h5v1h-5zM5 14h1v1h-1zM7 14h3v1h-3zM11 14h2v1h-2zM14 14h2v1h-2zM5 15h5v1h-5zM11 15h5v1h-5z"/><path fill="#ffffff" d="M6 11h1v1h-1zM12 11h1v1h-1zM6 12h1v1h-1zM12 12h1v1h-1zM6 14h1v1h-1zM13 14h1v1h-1z"/></svg>
<div class="vl" style="left:610px;top:50px;height:30px;background:#808080"></div>
<div class="vl" style="left:611px;top:51px;height:29px;background:#ffffff"></div>
<div class="vl" style="left:613px;top:53px;height:26px;background:#ffffff"></div>
<div class="vl" style="left:614px;top:53px;height:26px;background:#d4d0c8"></div>
<div class="vl" style="left:615px;top:53px;height:26px;background:#808080"></div>
<div class="hl" style="left:613px;top:53px;width:2px;background:#ffffff"></div>
<div class="hl" style="left:613px;top:78px;width:3px;background:#808080"></div>
<div class="vl" style="left:617px;top:53px;height:26px;background:#ffffff"></div>
<div class="vl" style="left:618px;top:53px;height:26px;background:#d4d0c8"></div>
<div class="vl" style="left:619px;top:53px;height:26px;background:#808080"></div>
<div class="hl" style="left:617px;top:53px;width:2px;background:#ffffff"></div>
<div class="hl" style="left:617px;top:78px;width:3px;background:#808080"></div>
<svg style="left:623px;top:58px" width="16" height="15" viewBox="0 0 16 15"><path fill="#808080" d="M0 0h9v1h-9zM0 1h1v1h-1zM0 2h1v1h-1zM0 3h1v1h-1zM0 4h1v1h-1zM0 5h1v1h-1zM0 6h1v1h-1zM0 7h1v1h-1zM0 8h1v1h-1zM0 9h1v1h-1zM0 10h1v1h-1zM0 11h1v1h-1zM0 12h1v1h-1zM0 13h1v1h-1zM0 14h9v1h-9z"/><path fill="#000080" d="M9 0h4v1h-4zM8 1h1v1h-1zM13 1h1v1h-1zM8 2h1v1h-1zM13 2h1v1h-1zM8 3h1v1h-1zM13 3h1v1h-1zM8 4h1v1h-1zM13 4h1v1h-1zM8 5h1v1h-1zM11 5h5v1h-5zM8 6h1v1h-1zM12 6h3v1h-3zM8 7h1v1h-1zM13 7h1v1h-1zM8 8h1v1h-1zM13 8h1v1h-1zM8 9h1v1h-1zM13 9h1v1h-1zM8 10h1v1h-1zM13 10h1v1h-1zM8 11h1v1h-1zM13 11h1v1h-1zM8 12h1v1h-1zM13 12h1v1h-1zM8 13h1v1h-1zM13 13h1v1h-1zM9 14h4v1h-4z"/><path fill="#ffffff" d="M1 1h7v1h-7zM9 1h4v1h-4zM1 2h7v1h-7zM9 2h4v1h-4zM1 3h1v1h-1zM5 3h3v1h-3zM9 3h4v1h-4zM1 4h7v1h-7zM9 4h4v1h-4zM1 5h2v1h-2zM7 5h1v1h-1zM9 5h2v1h-2zM1 6h7v1h-7zM9 6h3v1h-3zM1 7h2v1h-2zM7 7h1v1h-1zM9 7h4v1h-4zM1 8h7v1h-7zM9 8h4v1h-4zM1 9h2v1h-2zM7 9h1v1h-1zM9 9h4v1h-4zM1 10h7v1h-7zM9 10h4v1h-4zM1 11h2v1h-2zM7 11h1v1h-1zM9 11h4v1h-4zM1 12h7v1h-7zM9 12h4v1h-4zM1 13h7v1h-7zM9 13h4v1h-4z"/><path fill="#000000" d="M2 3h3v1h-3zM3 5h4v1h-4zM3 7h4v1h-4zM3 9h4v1h-4zM3 11h4v1h-4z"/></svg>
<svg style="left:646px;top:58px" width="16" height="15" viewBox="0 0 16 15"><path fill="#808080" d="M0 0h11v1h-11zM0 1h1v1h-1zM10 1h1v1h-1zM0 2h1v1h-1zM0 3h1v1h-1zM11 3h1v1h-1zM0 4h1v1h-1zM11 4h1v1h-1zM0 5h1v1h-1zM0 6h1v1h-1zM0 7h1v1h-1zM10 7h1v1h-1zM0 8h1v1h-1zM10 8h1v1h-1zM0 9h1v1h-1zM10 9h1v1h-1zM0 10h1v1h-1zM10 10h1v1h-1zM0 11h1v1h-1zM10 11h1v1h-1zM0 12h1v1h-1zM10 12h1v1h-1zM0 13h1v1h-1zM10 13h1v1h-1zM0 14h11v1h-11z"/><path fill="#800000" d="M13 0h2v1h-2zM11 1h3v1h-3zM6 2h2v1h-2zM10 2h2v1h-2zM7 3h4v1h-4zM8 4h2v1h-2zM7 5h4v1h-4zM6 6h2v1h-2zM10 6h2v1h-2zM5 7h2v1h-2zM11 7h2v1h-2zM4 8h2v1h-2zM12 8h2v1h-2zM3 9h2v1h-2zM3 10h1v1h-1z"/><path fill="#ffffff" d="M1 1h9v1h-9zM1 2h5v1h-5zM8 2h2v1h-2zM1 3h1v1h-1zM5 3h2v1h-2zM1 4h7v1h-7zM10 4h1v1h-1zM1 5h2v1h-2zM11 5h1v1h-1zM1 6h5v1h-5zM8 6h2v1h-2zM1 7h2v1h-2zM8 7h2v1h-2zM1 8h3v1h-3zM6 8h4v1h-4zM1 9h2v1h-2zM8 9h2v1h-2zM1 10h2v1h-2zM4 10h6v1h-6zM1 11h2v1h-2zM8 11h2v1h-2zM1 12h9v1h-9zM1 13h9v1h-9z"/><path fill="#000080" d="M13 2h1v1h-1zM13 3h1v1h-1zM13 4h1v1h-1zM13 5h1v1h-1zM13 6h1v1h-1zM13 7h1v1h-1zM13 9h1v1h-1zM11 10h5v1h-5zM12 11h3v1h-3zM13 12h1v1h-1z"/><path fill="#000000" d="M2 3h3v1h-3zM3 5h4v1h-4zM3 7h2v1h-2zM7 7h1v1h-1zM5 9h3v1h-3zM3 11h5v1h-5z"/></svg>
<svg style="left:669px;top:58px" width="16" height="15" viewBox="0 0 16 15"><path fill="#808080" d="M0 1h11v1h-11zM0 2h1v1h-1zM10 2h1v1h-1zM0 3h1v1h-1zM10 3h1v1h-1zM0 4h1v1h-1zM3 4h2v1h-2zM10 4h1v1h-1zM0 5h1v1h-1zM10 5h1v1h-1zM0 6h1v1h-1zM4 6h4v1h-4zM10 6h1v1h-1zM0 7h1v1h-1zM10 7h3v1h-3zM14 7h2v1h-2zM0 8h1v1h-1zM4 8h4v1h-4zM10 8h3v1h-3zM14 8h2v1h-2zM0 9h1v1h-1zM10 9h3v1h-3zM14 9h2v1h-2zM0 10h1v1h-1zM5 10h3v1h-3zM10 10h3v1h-3zM14 10h2v1h-2zM0 11h1v1h-1zM10 11h3v1h-3zM14 11h2v1h-2zM0 12h1v1h-1zM4 12h4v1h-4zM10 12h3v1h-3zM14 12h2v1h-2zM0 13h1v1h-1zM10 13h1v1h-1zM0 14h1v1h-1z"/><path fill="#ffffff" d="M1 2h9v1h-9zM11 2h1v1h-1zM1 3h1v1h-1zM9 3h1v1h-1zM11 3h1v1h-1zM1 4h1v1h-1zM9 4h1v1h-1zM11 4h1v1h-1zM1 5h1v1h-1zM11 5h1v1h-1zM1 6h1v1h-1zM11 6h1v1h-1zM1 7h1v1h-1zM1 8h1v1h-1zM1 9h1v1h-1zM1 10h1v1h-1zM1 11h1v1h-1zM1 12h1v1h-1zM1 13h1v1h-1zM11 13h5v1h-5zM1 14h11v1h-11z"/><path fill="#d4d0c8" d="M2 3h7v1h-7zM2 4h1v1h-1zM5 4h4v1h-4zM2 5h8v1h-8zM2 6h2v1h-2zM8 6h2v1h-2zM2 7h8v1h-8zM2 8h2v1h-2zM8 8h2v1h-2zM2 9h8v1h-8zM2 10h3v1h-3zM8 10h2v1h-2zM2 11h8v1h-8zM2 12h2v1h-2zM8 12h2v1h-2zM2 13h8v1h-8z"/></svg>
<svg style="left:692px;top:58px" width="16" height="15" viewBox="0 0 16 15"><path fill="#808080" d="M0 0h11v1h-11zM0 1h1v1h-1zM10 1h1v1h-1zM0 2h1v1h-1zM10 2h1v1h-1zM0 3h1v1h-1zM3 3h2v1h-2zM10 3h1v1h-1zM14 3h1v1h-1zM0 4h1v1h-1zM10 4h1v1h-1zM13 4h2v1h-2zM0 5h1v1h-1zM4 5h4v1h-4zM10 5h1v1h-1zM13 5h1v1h-1zM0 6h1v1h-1zM10 6h1v1h-1zM12 6h2v1h-2zM0 7h1v1h-1zM4 7h5v1h-5zM10 7h3v1h-3zM0 8h1v1h-1zM8 8h4v1h-4zM0 9h1v1h-1zM4 9h4v1h-4zM9 9h3v1h-3zM0 10h1v1h-1zM9 10h2v1h-2zM0 11h1v1h-1zM4 11h4v1h-4zM10 11h1v1h-1zM0 12h1v1h-1zM10 12h1v1h-1zM0 13h1v1h-1zM10 13h1v1h-1zM0 14h11v1h-11z"/><path fill="#ffffff" d="M1 1h9v1h-9zM11 1h1v1h-1zM1 2h1v1h-1zM9 2h1v1h-1zM11 2h1v1h-1zM1 3h1v1h-1zM9 3h1v1h-1zM11 3h1v1h-1zM15 3h1v1h-1zM1 4h1v1h-1zM11 4h1v1h-1zM15 4h1v1h-1zM1 5h1v1h-1zM11 5h1v1h-1zM14 5h1v1h-1zM1 6h1v1h-1zM11 6h1v1h-1zM14 6h1v1h-1zM1 7h1v1h-1zM13 7h1v1h-1zM1 8h1v1h-1zM12 8h1v1h-1zM1 9h1v1h-1zM12 9h1v1h-1zM1 10h1v1h-1zM11 10h1v1h-1zM1 11h1v1h-1zM11 11h1v1h-1zM1 12h1v1h-1zM11 12h1v1h-1zM1 13h9v1h-9zM11 13h1v1h-1zM11 14h1v1h-1z"/><path fill="#d4d0c8" d="M2 2h7v1h-7zM2 3h1v1h-1zM5 3h4v1h-4zM2 4h8v1h-8zM2 5h2v1h-2zM8 5h2v1h-2zM2 6h8v1h-8zM2 7h2v1h-2zM9 7h1v1h-1zM2 8h6v1h-6zM2 9h2v1h-2zM8 9h1v1h-1zM2 10h7v1h-7zM2 11h2v1h-2zM8 11h2v1h-2zM2 12h8v1h-8z"/></svg>
<svg style="left:726px;top:61px" width="10" height="11" viewBox="0 0 10 11"><path fill="#000000" d="M4 0h1v1h-1zM4 1h2v1h-2zM4 2h1v1h-1zM6 2h1v1h-1zM0 3h5v1h-5zM7 3h1v1h-1zM0 4h1v1h-1zM8 4h1v1h-1zM0 5h1v1h-1zM9 5h1v1h-1zM0 6h1v1h-1zM8 6h1v1h-1zM0 7h5v1h-5zM7 7h1v1h-1zM4 8h1v1h-1zM6 8h1v1h-1zM4 9h2v1h-2zM4 10h1v1h-1z"/><path fill="#ffff00" d="M5 2h1v1h-1zM5 3h2v1h-2zM1 4h7v1h-7zM1 5h8v1h-8zM1 6h7v1h-7zM5 7h2v1h-2zM5 8h1v1h-1z"/></svg>
<svg style="left:747px;top:58px" width="16" height="14" viewBox="0 0 16 14"><path fill="#000080" d="M0 0h8v1h-8zM7 1h2v1h-2zM8 2h1v1h-1zM8 3h1v1h-1zM8 4h1v1h-1zM8 5h1v1h-1zM6 6h5v1h-5zM7 7h3v1h-3zM8 8h1v1h-1z"/><path fill="#000000" d="M4 3h2v1h-2zM11 3h2v1h-2zM3 4h2v1h-2zM12 4h2v1h-2zM3 5h2v1h-2zM12 5h2v1h-2zM3 6h2v1h-2zM12 6h2v1h-2zM3 7h2v1h-2zM12 7h2v1h-2zM2 8h2v1h-2zM13 8h2v1h-2zM3 9h2v1h-2zM12 9h2v1h-2zM3 10h2v1h-2zM12 10h2v1h-2zM3 11h2v1h-2zM12 11h2v1h-2zM3 12h2v1h-2zM12 12h2v1h-2zM4 13h2v1h-2zM11 13h2v1h-2z"/></svg>
<svg style="left:770px;top:58px" width="16" height="14" viewBox="0 0 16 14"><path fill="#000080" d="M1 0h10v1h-10zM0 1h1v1h-1zM11 1h2v1h-2zM12 2h1v1h-1zM12 3h1v1h-1zM12 4h1v1h-1zM12 5h1v1h-1zM10 6h5v1h-5zM11 7h3v1h-3zM12 8h1v1h-1z"/><path fill="#000000" d="M3 3h2v1h-2zM6 3h2v1h-2zM2 4h2v1h-2zM7 4h2v1h-2zM2 5h2v1h-2zM7 5h2v1h-2zM2 6h2v1h-2zM7 6h2v1h-2zM2 7h2v1h-2zM7 7h2v1h-2zM1 8h2v1h-2zM8 8h2v1h-2zM2 9h2v1h-2zM7 9h2v1h-2zM2 10h2v1h-2zM7 10h2v1h-2zM2 11h2v1h-2zM7 11h2v1h-2zM2 12h2v1h-2zM7 12h2v1h-2zM3 13h2v1h-2zM6 13h2v1h-2z"/></svg>
<svg style="left:792px;top:58px" width="16" height="14" viewBox="0 0 16 14"><path fill="#000080" d="M6 0h7v1h-7zM5 1h1v1h-1zM13 1h1v1h-1zM5 2h1v1h-1zM13 2h1v1h-1zM5 3h1v1h-1zM13 3h1v1h-1zM5 4h1v1h-1zM13 4h1v1h-1zM13 5h1v1h-1zM11 6h5v1h-5zM12 7h3v1h-3zM13 8h1v1h-1z"/><path fill="#000000" d="M2 3h2v1h-2zM7 3h2v1h-2zM1 4h2v1h-2zM8 4h2v1h-2zM1 5h2v1h-2zM8 5h2v1h-2zM1 6h2v1h-2zM8 6h2v1h-2zM1 7h2v1h-2zM8 7h2v1h-2zM0 8h2v1h-2zM9 8h2v1h-2zM1 9h2v1h-2zM8 9h2v1h-2zM1 10h2v1h-2zM8 10h2v1h-2zM1 11h2v1h-2zM8 11h2v1h-2zM1 12h2v1h-2zM8 12h2v1h-2zM2 13h2v1h-2zM7 13h2v1h-2z"/></svg>
<svg style="left:815px;top:58px" width="10" height="14" viewBox="0 0 10 14"><path fill="#000080" d="M3 3h1v1h-1zM4 4h1v1h-1zM0 5h6v1h-6zM4 6h1v1h-1zM3 7h1v1h-1z"/><path fill="#000000" d="M7 3h2v1h-2zM6 4h2v1h-2zM6 5h2v1h-2zM6 6h2v1h-2zM6 7h2v1h-2zM5 8h2v1h-2zM6 9h2v1h-2zM6 10h2v1h-2zM6 11h2v1h-2zM6 12h2v1h-2zM7 13h2v1h-2z"/></svg>
<div class="vl" style="left:716px;top:55px;height:22px;background:#808080"></div>
<div class="vl" style="left:717px;top:55px;height:22px;background:#ffffff"></div>
<div class="hl" style="left:4px;top:80px;width:823px;background:#808080"></div>
<div class="hl" style="left:4px;top:81px;width:823px;background:#ffffff"></div>
<div class="vl" style="left:5px;top:83px;height:26px;background:#ffffff"></div>
<div class="vl" style="left:6px;top:83px;height:26px;background:#d4d0c8"></div>
<div class="vl" style="left:7px;top:83px;height:26px;background:#808080"></div>
<div class="hl" style="left:5px;top:83px;width:2px;background:#ffffff"></div>
<div class="hl" style="left:5px;top:108px;width:3px;background:#808080"></div>
<div class="vl" style="left:9px;top:83px;height:26px;background:#ffffff"></div>
<div class="vl" style="left:10px;top:83px;height:26px;background:#d4d0c8"></div>
<div class="vl" style="left:11px;top:83px;height:26px;background:#808080"></div>
<div class="hl" style="left:9px;top:83px;width:2px;background:#ffffff"></div>
<div class="hl" style="left:9px;top:108px;width:3px;background:#808080"></div>
<div class="sunk" style="left:12px;top:86px;width:151px;height:20px"></div>
<div class="t" style="left:17.50px;top:90px;font-family:'Liberation Sans';font-size:11px;color:#808080;line-height:13px;height:13px;transform:scaleX(0.9074);">(Globals)</div>
<div class="sbtn" style="left:145px;top:88px;width:16px;height:16px"></div>
<svg style="left:149px;top:94px" width="7" height="4" viewBox="0 0 7 4"><path fill="#000000" d="M0 0h7v1h-7zM1 1h5v1h-5zM2 2h3v1h-3zM3 3h1v1h-1z"/></svg>
<div class="sunk" style="left:163px;top:86px;width:151px;height:20px"></div>
<div class="t" style="left:168.50px;top:90px;font-family:'Liberation Sans';font-size:11px;color:#808080;line-height:13px;height:13px;transform:scaleX(0.9170);">(All global members)</div>
<div class="sbtn" style="left:296px;top:88px;width:16px;height:16px"></div>
<svg style="left:300px;top:94px" width="7" height="4" viewBox="0 0 7 4"><path fill="#000000" d="M0 0h7v1h-7zM1 1h5v1h-5zM2 2h3v1h-3zM3 3h1v1h-1z"/></svg>
<div class="sunk" style="left:314px;top:86px;width:251px;height:20px"></div>
<div class="t" style="left:317.50px;top:90px;font-family:'Liberation Sans';font-size:11px;color:#808080;line-height:13px;height:13px;transform:scaleX(0.9361);">(No members - Create New Class...)</div>
<div class="sbtn" style="left:547px;top:88px;width:16px;height:16px"></div>
<svg style="left:551px;top:94px" width="7" height="4" viewBox="0 0 7 4"><path fill="#000000" d="M0 0h7v1h-7zM1 1h5v1h-5zM2 2h3v1h-3zM3 3h1v1h-1z"/></svg>
<svg style="left:568px;top:89px" width="16" height="14" viewBox="0 0 16 14"><path fill="#800000" d="M8 0h1v1h-1zM1 1h1v1h-1zM4 3h1v1h-1zM11 4h1v1h-1zM2 6h1v1h-1z"/><path fill="#000000" d="M6 5h2v1h-2zM6 6h1v1h-1zM8 6h1v1h-1zM7 7h1v1h-1zM9 7h1v1h-1zM8 8h3v1h-3zM9 9h3v1h-3zM10 10h3v1h-3zM11 11h3v1h-3zM12 12h3v1h-3zM13 13h3v1h-3z"/><path fill="#ffff00" d="M7 6h1v1h-1zM8 7h1v1h-1z"/></svg>
<svg style="left:590px;top:94px" width="7" height="4" viewBox="0 0 7 4"><path fill="#000000" d="M0 0h7v1h-7zM1 1h5v1h-5zM2 2h3v1h-3zM3 3h1v1h-1z"/></svg>
<div class="vl" style="left:603px;top:80px;height:30px;background:#808080"></div>
<div class="vl" style="left:604px;top:81px;height:29px;background:#ffffff"></div>
<div class="vl" style="left:606px;top:83px;height:26px;background:#ffffff"></div>
<div class="vl" style="left:607px;top:83px;height:26px;background:#d4d0c8"></div>
<div class="vl" style="left:608px;top:83px;height:26px;background:#808080"></div>
<div class="hl" style="left:606px;top:83px;width:2px;background:#ffffff"></div>
<div class="hl" style="left:606px;top:108px;width:3px;background:#808080"></div>
<div class="vl" style="left:610px;top:83px;height:26px;background:#ffffff"></div>
<div class="vl" style="left:611px;top:83px;height:26px;background:#d4d0c8"></div>
<div class="vl" style="left:612px;top:83px;height:26px;background:#808080"></div>
<div class="hl" style="left:610px;top:83px;width:2px;background:#ffffff"></div>
<div class="hl" style="left:610px;top:108px;width:3px;background:#808080"></div>
<svg style="left:617px;top:88px" width="16" height="14" viewBox="0 0 16 14"><path fill="#000080" d="M6 0h2v1h-2zM6 1h2v1h-2zM6 2h2v1h-2zM4 3h6v1h-6zM5 4h4v1h-4zM6 5h2v1h-2z"/><path fill="#000000" d="M9 0h2v1h-2zM8 1h1v1h-1zM11 1h1v1h-1zM5 2h1v1h-1zM12 2h2v1h-2zM3 3h1v1h-1zM14 3h1v1h-1zM1 4h2v1h-2zM15 4h1v1h-1zM0 5h1v1h-1zM13 5h3v1h-3zM0 6h2v1h-2zM11 6h2v1h-2zM15 6h1v1h-1zM0 7h1v1h-1zM2 7h2v1h-2zM9 7h2v1h-2zM13 7h3v1h-3zM0 8h2v1h-2zM4 8h1v1h-1zM7 8h2v1h-2zM11 8h2v1h-2zM15 8h1v1h-1zM0 9h1v1h-1zM2 9h2v1h-2zM5 9h2v1h-2zM9 9h2v1h-2zM13 9h2v1h-2zM1 10h1v1h-1zM4 10h1v1h-1zM7 10h2v1h-2zM11 10h2v1h-2zM2 11h2v1h-2zM5 11h2v1h-2zM9 11h2v1h-2zM4 12h1v1h-1zM7 12h2v1h-2zM5 13h2v1h-2z"/><path fill="#ffffff" d="M9 1h2v1h-2zM8 2h4v1h-4zM10 3h4v1h-4zM3 4h2v1h-2zM9 4h6v1h-6zM1 5h5v1h-5zM8 5h5v1h-5zM2 6h9v1h-9zM13 6h2v1h-2zM1 7h1v1h-1zM4 7h5v1h-5zM11 7h2v1h-2zM2 8h2v1h-2zM5 8h2v1h-2zM9 8h2v1h-2zM13 8h2v1h-2zM1 9h1v1h-1zM4 9h1v1h-1zM7 9h2v1h-2zM11 9h2v1h-2zM2 10h2v1h-2zM5 10h2v1h-2zM9 10h2v1h-2zM4 11h1v1h-1zM7 11h2v1h-2zM5 12h2v1h-2z"/></svg>
<svg style="left:640px;top:89px" width="15" height="14" viewBox="0 0 15 14"><path fill="#000080" d="M1 0h1v1h-1zM5 0h1v1h-1zM9 0h1v1h-1zM13 0h1v1h-1zM3 1h1v1h-1zM7 1h1v1h-1zM11 1h1v1h-1zM1 2h1v1h-1zM5 2h1v1h-1zM9 2h1v1h-1zM13 2h1v1h-1zM4 3h2v1h-2zM10 3h2v1h-2zM4 4h2v1h-2zM10 4h2v1h-2zM4 5h2v1h-2zM10 5h2v1h-2zM2 6h12v1h-12zM3 7h4v1h-4zM9 7h4v1h-4zM4 8h2v1h-2zM10 8h2v1h-2z"/><path fill="#000000" d="M0 4h1v1h-1zM14 4h1v1h-1zM0 5h1v1h-1zM14 5h1v1h-1zM0 6h1v1h-1zM14 6h1v1h-1zM0 7h1v1h-1zM14 7h1v1h-1zM0 8h1v1h-1zM14 8h1v1h-1zM0 9h1v1h-1zM2 9h1v1h-1zM4 9h1v1h-1zM6 9h1v1h-1zM8 9h1v1h-1zM10 9h1v1h-1zM12 9h1v1h-1zM14 9h1v1h-1zM0 10h1v1h-1zM14 10h1v1h-1zM0 11h1v1h-1zM2 11h1v1h-1zM4 11h1v1h-1zM6 11h1v1h-1zM8 11h1v1h-1zM10 11h1v1h-1zM12 11h1v1h-1zM14 11h1v1h-1zM0 12h1v1h-1zM14 12h1v1h-1zM0 13h15v1h-15z"/><path fill="#ffffff" d="M1 7h2v1h-2zM7 7h2v1h-2zM13 7h1v1h-1zM1 8h3v1h-3zM6 8h4v1h-4zM12 8h2v1h-2zM1 9h1v1h-1zM3 9h1v1h-1zM5 9h1v1h-1zM7 9h1v1h-1zM9 9h1v1h-1zM11 9h1v1h-1zM13 9h1v1h-1zM1 10h13v1h-13zM1 11h1v1h-1zM3 11h1v1h-1zM5 11h1v1h-1zM7 11h1v1h-1zM9 11h1v1h-1zM11 11h1v1h-1zM13 11h1v1h-1zM1 12h13v1h-13z"/></svg>
<svg style="left:662px;top:88px" width="16" height="16" viewBox="0 0 16 16"><path fill="#808080" d="M11 0h3v1h-3zM10 1h3v1h-3zM3 2h3v1h-3zM9 2h3v1h-3zM4 3h3v1h-3zM8 3h3v1h-3zM5 4h5v1h-5zM6 5h3v1h-3zM5 6h5v1h-5zM4 7h3v1h-3zM8 7h3v1h-3zM0 8h15v1h-15zM0 9h1v1h-1zM3 9h2v1h-2zM14 9h1v1h-1zM0 10h1v1h-1zM2 10h1v1h-1zM4 10h1v1h-1zM6 10h1v1h-1zM8 10h1v1h-1zM10 10h1v1h-1zM12 10h1v1h-1zM14 10h1v1h-1zM0 11h1v1h-1zM14 11h1v1h-1zM0 12h1v1h-1zM2 12h1v1h-1zM4 12h1v1h-1zM6 12h1v1h-1zM8 12h1v1h-1zM10 12h1v1h-1zM12 12h1v1h-1zM14 12h1v1h-1zM0 13h1v1h-1zM14 13h1v1h-1zM0 14h15v1h-15z"/><path fill="#ffffff" d="M12 2h1v1h-1zM11 3h1v1h-1zM10 4h1v1h-1zM9 5h1v1h-1zM1 9h2v1h-2zM5 9h9v1h-9zM15 9h1v1h-1zM1 10h1v1h-1zM3 10h1v1h-1zM5 10h1v1h-1zM7 10h1v1h-1zM9 10h1v1h-1zM11 10h1v1h-1zM13 10h1v1h-1zM15 10h1v1h-1zM1 11h13v1h-13zM15 11h1v1h-1zM1 12h1v1h-1zM3 12h1v1h-1zM5 12h1v1h-1zM7 12h1v1h-1zM9 12h1v1h-1zM11 12h1v1h-1zM13 12h1v1h-1zM15 12h1v1h-1zM1 13h13v1h-13zM15 13h1v1h-1zM15 14h1v1h-1zM1 15h15v1h-15z"/></svg>
<svg style="left:691px;top:89px" width="4" height="14" viewBox="0 0 4 14"><path fill="#800000" d="M1 0h2v1h-2zM0 1h4v1h-4zM0 2h4v1h-4zM0 3h4v1h-4zM0 4h4v1h-4zM0 5h4v1h-4zM0 6h4v1h-4zM1 7h2v1h-2zM1 8h2v1h-2zM1 10h2v1h-2zM0 11h4v1h-4zM0 12h4v1h-4zM1 13h2v1h-2z"/></svg>
<svg style="left:708px;top:88px" width="16" height="15" viewBox="0 0 16 15"><path fill="#808080" d="M0 0h11v1h-11zM0 1h1v1h-1zM10 1h1v1h-1zM0 2h1v1h-1zM10 2h1v1h-1zM0 3h1v1h-1zM10 3h1v1h-1zM0 4h1v1h-1zM10 4h1v1h-1zM0 5h1v1h-1zM10 5h1v1h-1zM0 6h1v1h-1zM10 6h1v1h-1zM0 7h1v1h-1zM10 7h1v1h-1zM0 8h1v1h-1zM10 8h1v1h-1zM0 9h1v1h-1zM10 9h1v1h-1zM0 10h1v1h-1zM10 10h1v1h-1zM0 11h1v1h-1zM10 11h1v1h-1zM0 12h1v1h-1zM10 12h1v1h-1zM0 13h1v1h-1zM10 13h1v1h-1zM0 14h11v1h-11z"/><path fill="#ffffff" d="M1 1h9v1h-9zM1 2h9v1h-9zM1 3h1v1h-1zM5 3h5v1h-5zM1 4h9v1h-9zM1 5h2v1h-2zM9 5h1v1h-1zM1 6h9v1h-9zM1 7h2v1h-2zM9 7h1v1h-1zM1 8h9v1h-9zM1 9h3v1h-3zM8 9h2v1h-2zM1 10h9v1h-9zM1 11h2v1h-2zM9 11h1v1h-1zM1 12h9v1h-9zM1 13h9v1h-9z"/><path fill="#000080" d="M13 2h1v1h-1zM13 3h1v1h-1zM13 4h1v1h-1zM13 5h1v1h-1zM13 6h1v1h-1zM13 7h1v1h-1zM13 8h1v1h-1zM13 9h1v1h-1zM13 10h1v1h-1zM11 11h5v1h-5zM12 12h3v1h-3zM13 13h1v1h-1z"/><path fill="#000000" d="M2 3h3v1h-3zM3 5h6v1h-6zM3 7h6v1h-6zM4 9h4v1h-4zM3 11h6v1h-6z"/></svg>
<svg style="left:732px;top:88px" width="14" height="15" viewBox="0 0 14 15"><path fill="#000000" d="M6 0h2v1h-2zM3 1h3v1h-3zM8 1h2v1h-2zM3 2h1v1h-1zM5 2h1v1h-1zM8 2h1v1h-1zM10 2h2v1h-2zM3 3h1v1h-1zM5 3h1v1h-1zM8 3h1v1h-1zM10 3h1v1h-1zM12 3h1v1h-1zM3 4h1v1h-1zM5 4h1v1h-1zM8 4h1v1h-1zM10 4h1v1h-1zM12 4h1v1h-1zM3 5h1v1h-1zM5 5h1v1h-1zM8 5h1v1h-1zM10 5h1v1h-1zM12 5h1v1h-1zM0 6h2v1h-2zM3 6h1v1h-1zM5 6h1v1h-1zM8 6h1v1h-1zM10 6h1v1h-1zM12 6h1v1h-1zM0 7h1v1h-1zM2 7h2v1h-2zM12 7h1v1h-1zM0 8h1v1h-1zM3 8h1v1h-1zM12 8h1v1h-1zM1 9h1v1h-1zM12 9h1v1h-1zM2 10h1v1h-1zM12 10h1v1h-1zM2 11h1v1h-1zM11 11h1v1h-1zM3 12h1v1h-1zM11 12h1v1h-1zM4 13h1v1h-1zM10 13h1v1h-1zM4 14h7v1h-7z"/><path fill="#ffffff" d="M6 1h2v1h-2zM4 2h1v1h-1zM6 2h2v1h-2zM9 2h1v1h-1zM4 3h1v1h-1zM6 3h2v1h-2zM9 3h1v1h-1zM11 3h1v1h-1zM4 4h1v1h-1zM6 4h2v1h-2zM9 4h1v1h-1zM11 4h1v1h-1zM4 5h1v1h-1zM6 5h2v1h-2zM9 5h1v1h-1zM11 5h1v1h-1zM4 6h1v1h-1zM6 6h2v1h-2zM9 6h1v1h-1zM11 6h1v1h-1zM1 7h1v1h-1zM4 7h8v1h-8zM1 8h2v1h-2zM4 8h8v1h-8zM2 9h10v1h-10zM3 10h9v1h-9zM3 11h8v1h-8zM4 12h7v1h-7zM5 13h5v1h-5z"/></svg>
<div class="vl" style="left:752px;top:80px;height:30px;background:#808080"></div>
<div class="vl" style="left:753px;top:81px;height:29px;background:#ffffff"></div>
<div class="vl" style="left:755px;top:83px;height:26px;background:#ffffff"></div>
<div class="vl" style="left:756px;top:83px;height:26px;background:#d4d0c8"></div>
<div class="vl" style="left:757px;top:83px;height:26px;background:#808080"></div>
<div class="hl" style="left:755px;top:83px;width:2px;background:#ffffff"></div>
<div class="hl" style="left:755px;top:108px;width:3px;background:#808080"></div>
<div class="vl" style="left:759px;top:83px;height:26px;background:#ffffff"></div>
<div class="vl" style="left:760px;top:83px;height:26px;background:#d4d0c8"></div>
<div class="vl" style="left:761px;top:83px;height:26px;background:#808080"></div>
<div class="hl" style="left:759px;top:83px;width:2px;background:#ffffff"></div>
<div class="hl" style="left:759px;top:108px;width:3px;background:#808080"></div>
<svg style="left:765px;top:88px" width="16" height="14" viewBox="0 0 16 14"><path fill="#000000" d="M15 1h1v1h-1zM15 2h1v1h-1zM15 3h1v1h-1zM15 4h1v1h-1zM15 5h1v1h-1zM15 6h1v1h-1zM15 7h1v1h-1zM15 8h1v1h-1zM15 9h1v1h-1zM15 10h1v1h-1zM15 11h1v1h-1zM15 12h1v1h-1zM15 13h1v1h-1z"/><path fill="#000080" d="M0 3h4v1h-4zM6 3h3v1h-3zM12 3h3v1h-3zM0 4h4v1h-4zM5 4h5v1h-5zM12 4h3v1h-3zM0 5h2v1h-2zM5 5h2v1h-2zM8 5h2v1h-2zM12 5h2v1h-2zM0 6h2v1h-2zM5 6h5v1h-5zM12 6h2v1h-2zM0 7h4v1h-4zM6 7h3v1h-3zM12 7h3v1h-3zM0 8h2v1h-2zM5 8h5v1h-5zM14 8h1v1h-1zM0 9h2v1h-2zM5 9h2v1h-2zM8 9h2v1h-2zM14 9h1v1h-1zM0 10h2v1h-2zM5 10h5v1h-5zM14 10h1v1h-1zM0 11h2v1h-2zM6 11h3v1h-3zM10 11h5v1h-5z"/></svg>
<svg style="left:788px;top:88px" width="17" height="17" viewBox="0 0 17 17"><path fill="#808080" d="M5 0h4v1h-4zM4 1h6v1h-6zM4 2h7v1h-7zM0 3h2v1h-2zM3 3h8v1h-8zM1 4h1v1h-1zM4 4h7v1h-7zM1 5h1v1h-1zM4 5h8v1h-8zM1 6h1v1h-1zM5 6h7v1h-7zM0 7h2v1h-2zM5 7h7v1h-7zM1 8h1v1h-1zM5 8h7v1h-7zM1 9h1v1h-1zM5 9h8v1h-8zM1 10h1v1h-1zM5 10h8v1h-8zM15 10h2v1h-2zM0 11h2v1h-2zM6 11h9v1h-9zM1 12h1v1h-1zM4 12h1v1h-1zM6 12h7v1h-7zM1 13h1v1h-1zM3 13h1v1h-1zM6 13h6v1h-6zM0 14h12v1h-12z"/><path fill="#ffffff" d="M11 3h1v1h-1zM2 4h2v1h-2zM11 4h1v1h-1zM2 5h2v1h-2zM12 5h1v1h-1zM2 6h3v1h-3zM12 6h1v1h-1zM2 7h3v1h-3zM12 7h1v1h-1zM2 8h3v1h-3zM12 8h1v1h-1zM2 9h3v1h-3zM13 9h1v1h-1zM2 10h3v1h-3zM13 10h1v1h-1zM2 11h4v1h-4zM15 11h1v1h-1zM2 12h2v1h-2zM5 12h1v1h-1zM13 12h2v1h-2zM2 13h1v1h-1zM4 13h2v1h-2zM12 13h1v1h-1zM12 14h1v1h-1zM2 15h4v1h-4zM7 15h4v1h-4zM12 15h3v1h-3zM2 16h4v1h-4zM7 16h4v1h-4zM12 16h3v1h-3z"/></svg>
<svg style="left:814px;top:89px" width="11" height="14" viewBox="0 0 11 14"><path fill="#008000" d="M4 0h2v1h-2zM3 1h4v1h-4zM3 2h2v1h-2zM6 2h2v1h-2zM3 3h5v1h-5zM3 4h2v1h-2zM6 4h2v1h-2zM2 5h7v1h-7zM1 6h2v1h-2zM4 6h1v1h-1zM6 6h2v1h-2zM9 6h1v1h-1zM2 7h2v1h-2zM5 7h3v1h-3zM2 8h1v1h-1zM4 8h2v1h-2zM7 8h2v1h-2zM4 9h2v1h-2zM5 10h1v1h-1z"/><path fill="#00ff00" d="M6 0h1v1h-1zM2 1h1v1h-1zM7 1h1v1h-1zM8 2h2v1h-2zM2 3h1v1h-1zM2 4h1v1h-1zM8 4h1v1h-1zM1 5h1v1h-1zM0 6h1v1h-1zM3 6h1v1h-1zM8 6h1v1h-1zM4 7h1v1h-1zM1 8h1v1h-1zM3 8h1v1h-1zM6 8h1v1h-1zM9 8h1v1h-1zM2 9h1v1h-1zM7 9h1v1h-1zM9 9h1v1h-1zM4 10h1v1h-1z"/><path fill="#808000" d="M5 2h1v1h-1zM5 4h1v1h-1zM5 6h1v1h-1zM4 11h2v1h-2zM4 12h2v1h-2zM4 13h2v1h-2z"/><path fill="#000000" d="M9 5h1v1h-1zM10 6h1v1h-1zM8 7h1v1h-1zM6 9h1v1h-1zM6 10h1v1h-1zM6 11h1v1h-1zM6 12h1v1h-1zM6 13h1v1h-1z"/></svg>
<div class="hl" style="left:4px;top:110px;width:823px;background:#808080"></div>
<div class="vl" style="left:4px;top:110px;height:262px;background:#808080"></div>
<div class="hl" style="left:5px;top:111px;width:821px;background:#000000"></div>
<div class="vl" style="left:5px;top:111px;height:260px;background:#000000"></div>
<div class="hl" style="left:5px;top:370px;width:821px;background:#d4d0c8"></div>
<div class="vl" style="left:825px;top:111px;height:260px;background:#d4d0c8"></div>
<div class="hl" style="left:4px;top:371px;width:823px;background:#ffffff"></div>
<div class="vl" style="left:826px;top:110px;height:262px;background:#ffffff"></div>
<div class="a" style="left:6px;top:112px;width:803px;height:242px;background:#fff;"></div>
<div class="a dith2" style="left:6px;top:112px;width:20px;height:242px"></div>
<div class="hl" style="left:6px;top:112px;width:20px;background:#ffffff"></div>
<div class="vl" style="left:6px;top:112px;height:242px;background:#ffffff"></div>
<div class="code g" style="left:26.5px;top:113px">C MODEL  BALKA: EXT=6, PAR=9, WRK=16, STR =1, ADR=1,IGN=2</div>
<div class="code g" style="left:26.5px;top:126px">C</div>
<div class="code g" style="left:26.5px;top:139px">C</div>
<div class="code g" style="left:26.5px;top:152px">C HELP Б<span class="cy">алочный идеально упругий элемент.</span></div>
<div class="code g" style="left:26.5px;top:165px">C HELP НАЗВАНИЕ:            Б<span class="cy">алочный идеально упругий ....</span></div>
<div class="a" style="left:66px;top:177px;width:8px;height:13px;background:#008000;"></div>
<div class="code g" style="left:26.5px;top:191px">C HELP     <span class="cy">модели.</span></div>
<div class="code g" style="left:26.5px;top:204px">C</div>
<div class="a" style="left:66px;top:216px;width:8px;height:39px;background:#008000;"></div>
<div class="code " style="left:74.5px;top:217px"><span class="b">include</span> 'init.inc'</div>
<div class="code " style="left:74.5px;top:243px"><span class="b">SUBROUTINE</span> BALKA (I,Y,X,V,A,PAR,NEW,OLD,WRK)</div>
<div class="code g" style="left:26.5px;top:256px">!DEC$ ATTRIBUTES DLLEXPORT::BALKA</div>
<div class="a" style="left:66px;top:268px;width:8px;height:86px;background:#008000;"></div>
<div class="code " style="left:74.5px;top:282px"><span class="b">REAL*8</span> I, Y, X, V, A, PAR, NEW, OLD, WRK</div>
<div class="code " style="left:74.5px;top:308px"><span class="b">include</span> 'common.inc'</div>
<div class="code " style="left:74.5px;top:334px"><span class="b">END</span></div>
<div class="a" style="left:26px;top:333px;width:2px;height:13px;background:#000;"></div>
<svg style="left:8px;top:334px" width="14" height="11" viewBox="0 0 14 11"><path fill="#800000" d="M3 0h5v1h-5zM1 1h7v1h-7zM1 2h7v1h-7zM0 3h3v1h-3zM0 4h3v1h-3zM0 5h3v1h-3zM0 6h3v1h-3zM0 7h3v1h-3zM1 8h7v1h-7zM1 9h7v1h-7zM3 10h5v1h-5z"/><path fill="#000000" d="M8 0h1v1h-1zM8 1h2v1h-2zM8 2h1v1h-1zM10 2h1v1h-1zM3 3h6v1h-6zM11 3h1v1h-1zM3 4h1v1h-1zM12 4h1v1h-1zM3 5h1v1h-1zM13 5h1v1h-1zM3 6h1v1h-1zM12 6h1v1h-1zM3 7h6v1h-6zM11 7h1v1h-1zM8 8h1v1h-1zM10 8h1v1h-1zM8 9h2v1h-2zM8 10h1v1h-1z"/><path fill="#ffff00" d="M9 2h1v1h-1zM9 3h2v1h-2zM4 4h8v1h-8zM4 5h9v1h-9zM4 6h8v1h-8zM9 7h2v1h-2zM9 8h1v1h-1z"/></svg>
<div class="a dith2" style="left:809px;top:112px;width:16px;height:242px"></div>
<div class="sbtn" style="left:809px;top:112px;width:16px;height:7px;border-bottom-color:#000;box-shadow:inset 1px 1px #fff"></div>
<div class="sbtn" style="left:809px;top:119px;width:16px;height:16px"></div>
<svg style="left:813px;top:125px" width="7" height="4" viewBox="0 0 7 4"><path fill="#000000" d="M3 0h1v1h-1zM2 1h3v1h-3zM1 2h5v1h-5zM0 3h7v1h-7z"/></svg>
<div class="sbtn" style="left:809px;top:135px;width:16px;height:191px"></div>
<div class="sbtn" style="left:809px;top:338px;width:16px;height:16px"></div>
<svg style="left:813px;top:344px" width="7" height="4" viewBox="0 0 7 4"><path fill="#000000" d="M0 0h7v1h-7zM1 1h5v1h-5zM2 2h3v1h-3zM3 3h1v1h-1z"/></svg>
<div class="a dith" style="left:6px;top:354px;width:803px;height:16px"></div>
<div class="sbtn" style="left:6px;top:354px;width:7px;height:16px;border-right-color:#000;box-shadow:inset 1px 1px #fff"></div>
<div class="sbtn" style="left:13px;top:354px;width:16px;height:16px"></div>
<svg style="left:18px;top:358px" width="4" height="7" viewBox="0 0 4 7"><path fill="#000000" d="M3 0h1v1h-1zM2 1h2v1h-2zM1 2h3v1h-3zM0 3h4v1h-4zM1 4h3v1h-3zM2 5h2v1h-2zM3 6h1v1h-1z"/></svg>
<div class="sbtn" style="left:29px;top:354px;width:36px;height:16px"></div>
<div class="sbtn" style="left:793px;top:354px;width:16px;height:16px"></div>
<svg style="left:799px;top:358px" width="4" height="7" viewBox="0 0 4 7"><path fill="#000000" d="M0 0h1v1h-1zM0 1h2v1h-2zM0 2h3v1h-3zM0 3h4v1h-4zM0 4h3v1h-3zM0 5h2v1h-2zM0 6h1v1h-1z"/></svg>
<div class="a" style="left:809px;top:354px;width:16px;height:16px;background:#d4d0c8;"></div>
<div class="hl" style="left:4px;top:376px;width:823px;background:#000000"></div>
<div class="a" style="left:7px;top:380px;width:12px;height:12px;border:1px solid;border-color:#fff #606060 #606060 #fff"></div>
<svg style="left:7px;top:380px" width="12" height="8" viewBox="0 0 12 8"><path fill="#404040" d="M3 3h2v1h-2zM7 3h2v1h-2zM4 4h4v1h-4zM5 5h2v1h-2zM4 6h4v1h-4zM3 7h2v1h-2zM7 7h2v1h-2z"/></svg>
<div class="a" style="left:7px;top:394px;width:12px;height:12px;border:1px solid;border-color:#fff #606060 #606060 #fff"></div>
<svg style="left:7px;top:394px" width="12" height="9" viewBox="0 0 12 9"><path fill="#404040" d="M8 2h1v1h-1zM7 3h2v1h-2zM6 4h3v1h-3zM5 5h4v1h-4zM6 6h3v1h-3zM7 7h2v1h-2zM8 8h1v1h-1z"/></svg>
<div class="vl" style="left:10px;top:409px;height:180px;background:#ffffff"></div>
<div class="vl" style="left:11px;top:409px;height:180px;background:#d4d0c8"></div>
<div class="vl" style="left:12px;top:409px;height:180px;background:#808080"></div>
<div class="hl" style="left:10px;top:409px;width:2px;background:#ffffff"></div>
<div class="hl" style="left:10px;top:588px;width:3px;background:#808080"></div>
<div class="vl" style="left:14px;top:409px;height:180px;background:#ffffff"></div>
<div class="vl" style="left:15px;top:409px;height:180px;background:#d4d0c8"></div>
<div class="vl" style="left:16px;top:409px;height:180px;background:#808080"></div>
<div class="hl" style="left:14px;top:409px;width:2px;background:#ffffff"></div>
<div class="hl" style="left:14px;top:588px;width:3px;background:#808080"></div>
<div class="a" style="left:386px;top:380px;width:12px;height:12px;border:1px solid;border-color:#fff #606060 #606060 #fff"></div>
<svg style="left:386px;top:380px" width="12" height="8" viewBox="0 0 12 8"><path fill="#404040" d="M3 3h2v1h-2zM7 3h2v1h-2zM4 4h4v1h-4zM5 5h2v1h-2zM4 6h4v1h-4zM3 7h2v1h-2zM7 7h2v1h-2z"/></svg>
<div class="a" style="left:386px;top:394px;width:12px;height:12px;border:1px solid;border-color:#fff #606060 #606060 #fff"></div>
<svg style="left:386px;top:394px" width="12" height="9" viewBox="0 0 12 9"><path fill="#404040" d="M8 2h1v1h-1zM7 3h2v1h-2zM6 4h3v1h-3zM5 5h4v1h-4zM6 6h3v1h-3zM7 7h2v1h-2zM8 8h1v1h-1z"/></svg>
<div class="vl" style="left:389px;top:409px;height:180px;background:#ffffff"></div>
<div class="vl" style="left:390px;top:409px;height:180px;background:#d4d0c8"></div>
<div class="vl" style="left:391px;top:409px;height:180px;background:#808080"></div>
<div class="hl" style="left:389px;top:409px;width:2px;background:#ffffff"></div>
<div class="hl" style="left:389px;top:588px;width:3px;background:#808080"></div>
<div class="vl" style="left:393px;top:409px;height:180px;background:#ffffff"></div>
<div class="vl" style="left:394px;top:409px;height:180px;background:#d4d0c8"></div>
<div class="vl" style="left:395px;top:409px;height:180px;background:#808080"></div>
<div class="hl" style="left:393px;top:409px;width:2px;background:#ffffff"></div>
<div class="hl" style="left:393px;top:588px;width:3px;background:#808080"></div>
<div class="vl" style="left:377px;top:377px;height:215px;background:#ffffff"></div>
<div class="vl" style="left:382px;top:376px;height:216px;background:#000000"></div>
<div class="t" style="left:28.00px;top:385px;font-family:'Liberation Sans';font-size:11px;color:#000;line-height:13px;height:13px;transform:scaleX(0.9030);-webkit-text-stroke:0.3px;">Context:</div>
<div class="hl" style="left:35px;top:396px;width:6px;background:#000"></div>
<div class="sunk" style="left:69px;top:380px;width:296px;height:21px"></div>
<div class="t" style="left:74.00px;top:385px;font-family:'Liberation Sans';font-size:11px;color:#000;line-height:13px;height:13px;transform:scaleX(0.9467);-webkit-text-stroke:0.3px;">BALKA(REAL(8), REAL(8), REAL(8), REAL(8), REAL(8), F</div>
<div class="sbtn" style="left:347px;top:382px;width:16px;height:17px"></div>
<svg style="left:351px;top:388px" width="7" height="4" viewBox="0 0 7 4"><path fill="#000000" d="M0 0h7v1h-7zM1 1h5v1h-5zM2 2h3v1h-3zM3 3h1v1h-1z"/></svg>
<div class="a" style="left:22px;top:405px;width:349px;height:184px;border:1px solid #000;background:#fff"></div>
<div class="a" style="left:23px;top:406px;width:347px;height:15px;background:#d4d0c8;"></div>
<div class="hl" style="left:23px;top:406px;width:347px;background:#ffffff"></div>
<div class="hl" style="left:23px;top:421px;width:347px;background:#000000"></div>
<div class="vl" style="left:23px;top:406px;height:15px;background:#ffffff"></div>
<div class="vl" style="left:343px;top:406px;height:15px;background:#000000"></div>
<div class="a" style="left:23px;top:406px;width:320px;height:15px;overflow:hidden">
<div class="t" style="left:3.00px;top:3px;font-weight:bold;transform:scaleX(1.0351)">Name</div></div>
<div class="vl" style="left:344px;top:406px;height:15px;background:#ffffff"></div>
<div class="a" style="left:344px;top:406px;width:26px;height:15px;overflow:hidden">
<div class="t" style="left:2.50px;top:3px;font-weight:bold;transform:scaleX(1.0825)">Valu</div></div>
<div class="a" style="left:23px;top:573px;width:347px;height:15px;background:#d4d0c8;"></div>
<div class="hl" style="left:23px;top:573px;width:347px;background:#000000"></div>
<div class="a" style="left:23px;top:574px;width:15px;height:14px;background:#d4d0c8;border:1px solid;border-color:#fff #808080 #808080 #fff;box-shadow:inset -1px -1px #808080"></div>
<svg style="left:28px;top:577px" width="4" height="7" viewBox="0 0 4 7"><path fill="#808080" d="M3 0h1v1h-1zM2 1h2v1h-2zM1 2h3v1h-3zM0 3h4v1h-4zM1 4h3v1h-3zM2 5h2v1h-2zM3 6h1v1h-1z"/></svg>
<div class="vl" style="left:38px;top:574px;height:14px;background:#000000"></div>
<div class="a" style="left:39px;top:574px;width:15px;height:14px;background:#d4d0c8;border:1px solid;border-color:#fff #808080 #808080 #fff;box-shadow:inset -1px -1px #808080"></div>
<svg style="left:44px;top:577px" width="4" height="7" viewBox="0 0 4 7"><path fill="#808080" d="M0 0h1v1h-1zM0 1h2v1h-2zM0 2h3v1h-3zM0 3h4v1h-4zM0 4h3v1h-3zM0 5h2v1h-2zM0 6h1v1h-1z"/></svg>
<div class="vl" style="left:54px;top:574px;height:14px;background:#000000"></div>
<svg style="left:23px;top:573px;shape-rendering:auto" width="347" height="16" viewBox="0 0 347 16"><polygon points="68,0.5 75,15.5 117.6,15.5 124.1,0.5" fill="#d4d0c8"/><polyline points="68,0.5 75,15.5 117.6,15.5 124.1,0.5" fill="none" stroke="#000" stroke-width="1.1"/><path d="M68 0.5H124.1" stroke="#000" stroke-width="1" shape-rendering="crispEdges"/><polygon points="116.5,0.5 123.5,15.5 150,15.5 156.5,0.5" fill="#d4d0c8"/><polyline points="116.5,0.5 123.5,15.5 150,15.5 156.5,0.5" fill="none" stroke="#000" stroke-width="1.1"/><path d="M116.5 0.5H156.5" stroke="#000" stroke-width="1" shape-rendering="crispEdges"/><polygon points="32,0.5 39,15.5 69.5,15.5 76.0,0.5" fill="#fff"/><polyline points="32,0.5 39,15.5 69.5,15.5 76.0,0.5" fill="none" stroke="#000" stroke-width="1.1"/><path d="M33 0.5H75.5" stroke="#fff" stroke-width="1" shape-rendering="crispEdges"/></svg>
<div class="t" style="left:66.25px;top:574px;font-family:'Liberation Sans';font-size:9.5px;color:#000;line-height:13px;height:13px;transform:scaleX(1.0616);-webkit-text-stroke:0.12px;">Auto</div>
<div class="t" style="left:104.40px;top:574px;font-family:'Liberation Sans';font-size:9.5px;color:#000;line-height:13px;height:13px;transform:scaleX(1.0781);-webkit-text-stroke:0.12px;">Locals</div>
<div class="t" style="left:152.25px;top:574px;font-family:'Liberation Sans';font-size:9.5px;color:#000;line-height:13px;height:13px;transform:scaleX(1.0662);-webkit-text-stroke:0.12px;">this</div>
<div class="a" style="left:401px;top:380px;width:420px;height:209px;border:1px solid #000;background:#fff"></div>
<div class="a" style="left:402px;top:381px;width:418px;height:15px;background:#d4d0c8;"></div>
<div class="hl" style="left:402px;top:381px;width:418px;background:#ffffff"></div>
<div class="hl" style="left:402px;top:396px;width:418px;background:#000000"></div>
<div class="vl" style="left:402px;top:381px;height:15px;background:#ffffff"></div>
<div class="vl" style="left:561px;top:381px;height:15px;background:#000000"></div>
<div class="a" style="left:402px;top:381px;width:159px;height:15px;overflow:hidden">
<div class="t" style="left:3.00px;top:3px;font-weight:bold;transform:scaleX(1.0351)">Name</div></div>
<div class="vl" style="left:562px;top:381px;height:15px;background:#ffffff"></div>
<div class="a" style="left:562px;top:381px;width:258px;height:15px;overflow:hidden">
<div class="t" style="left:2.00px;top:3px;font-weight:bold;transform:scaleX(1.1135)">Value</div></div>
<div class="a" style="left:402px;top:573px;width:418px;height:15px;background:#d4d0c8;"></div>
<div class="hl" style="left:402px;top:573px;width:418px;background:#000000"></div>
<div class="a" style="left:402px;top:574px;width:15px;height:14px;background:#d4d0c8;border:1px solid;border-color:#fff #808080 #808080 #fff;box-shadow:inset -1px -1px #808080"></div>
<svg style="left:407px;top:577px" width="4" height="7" viewBox="0 0 4 7"><path fill="#808080" d="M3 0h1v1h-1zM2 1h2v1h-2zM1 2h3v1h-3zM0 3h4v1h-4zM1 4h3v1h-3zM2 5h2v1h-2zM3 6h1v1h-1z"/></svg>
<div class="vl" style="left:417px;top:574px;height:14px;background:#000000"></div>
<div class="a" style="left:418px;top:574px;width:15px;height:14px;background:#d4d0c8;border:1px solid;border-color:#fff #808080 #808080 #fff;box-shadow:inset -1px -1px #808080"></div>
<svg style="left:423px;top:577px" width="4" height="7" viewBox="0 0 4 7"><path fill="#808080" d="M0 0h1v1h-1zM0 1h2v1h-2zM0 2h3v1h-3zM0 3h4v1h-4zM0 4h3v1h-3zM0 5h2v1h-2zM0 6h1v1h-1z"/></svg>
<div class="vl" style="left:433px;top:574px;height:14px;background:#000000"></div>
<svg style="left:402px;top:573px;shape-rendering:auto" width="418" height="16" viewBox="0 0 418 16"><polygon points="82.5,0.5 89.5,15.5 134,15.5 140.5,0.5" fill="#d4d0c8"/><polyline points="82.5,0.5 89.5,15.5 134,15.5 140.5,0.5" fill="none" stroke="#000" stroke-width="1.1"/><path d="M82.5 0.5H140.5" stroke="#000" stroke-width="1" shape-rendering="crispEdges"/><polygon points="133.5,0.5 140.5,15.5 185,15.5 191.5,0.5" fill="#d4d0c8"/><polyline points="133.5,0.5 140.5,15.5 185,15.5 191.5,0.5" fill="none" stroke="#000" stroke-width="1.1"/><path d="M133.5 0.5H191.5" stroke="#000" stroke-width="1" shape-rendering="crispEdges"/><polygon points="184.5,0.5 191.5,15.5 236,15.5 242.5,0.5" fill="#d4d0c8"/><polyline points="184.5,0.5 191.5,15.5 236,15.5 242.5,0.5" fill="none" stroke="#000" stroke-width="1.1"/><path d="M184.5 0.5H242.5" stroke="#000" stroke-width="1" shape-rendering="crispEdges"/><polygon points="32,0.5 39,15.5 83,15.5 89.5,0.5" fill="#fff"/><polyline points="32,0.5 39,15.5 83,15.5 89.5,0.5" fill="none" stroke="#000" stroke-width="1.1"/><path d="M33 0.5H89" stroke="#fff" stroke-width="1" shape-rendering="crispEdges"/></svg>
<div class="t" style="left:445.40px;top:574px;font-family:'Liberation Sans';font-size:9.5px;color:#000;line-height:13px;height:13px;transform:scaleX(1.0707);-webkit-text-stroke:0.12px;">Watch1</div>
<div class="t" style="left:496.25px;top:574px;font-family:'Liberation Sans';font-size:9.5px;color:#000;line-height:13px;height:13px;transform:scaleX(1.0597);-webkit-text-stroke:0.12px;">Watch2</div>
<div class="t" style="left:547.50px;top:574px;font-family:'Liberation Sans';font-size:9.5px;color:#000;line-height:13px;height:13px;transform:scaleX(1.0393);-webkit-text-stroke:0.12px;">Watch3</div>
<div class="t" style="left:598.50px;top:574px;font-family:'Liberation Sans';font-size:9.5px;color:#000;line-height:13px;height:13px;transform:scaleX(1.0518);-webkit-text-stroke:0.12px;">Watch4</div>
<svg style="left:402px;top:397px" width="418" height="17" viewBox="0 0 418 17"><path d="M4 1.5H156M4 15.5H156M4.5 1V16M155.5 1V16" fill="none" stroke="#000" stroke-width="1" stroke-dasharray="1 1"/><path d="M0 16.5H418M159.5 0V17" fill="none" stroke="#808080" stroke-width="1" stroke-dasharray="1 1"/></svg>
<div class="hl" style="left:4px;top:592px;width:823px;background:#808080"></div>
<div class="hl" style="left:4px;top:593px;width:823px;background:#ffffff"></div>
<div class="t" style="left:10.50px;top:597px;font-family:'Liberation Sans';font-size:11px;color:#000;line-height:13px;height:13px;transform:scaleX(0.9716);-webkit-text-stroke:0.3px;">Break at location breakpoint</div>
<div class="a" style="left:608px;top:596px;width:84px;height:15px;border:1px solid;border-color:#808080 #fff #fff #808080"></div>
<div class="t" style="left:617.50px;top:597px;font-family:'Liberation Sans';font-size:11px;color:#000;line-height:13px;height:13px;transform:scaleX(0.9356);-webkit-text-stroke:0.3px;">Ln 18, Col 1</div>
<div class="a" style="left:694px;top:596px;width:26px;height:15px;border:1px solid;border-color:#808080 #fff #fff #808080"></div>
<div class="t" style="left:696.50px;top:597px;font-family:'Liberation Sans';font-size:11px;color:#808080;line-height:13px;height:13px;transform:scaleX(0.9252);">REC</div>
<div class="a" style="left:722px;top:596px;width:25px;height:15px;border:1px solid;border-color:#808080 #fff #fff #808080"></div>
<div class="t" style="left:724.50px;top:597px;font-family:'Liberation Sans';font-size:11px;color:#808080;line-height:13px;height:13px;transform:scaleX(0.9069);">COL</div>
<div class="a" style="left:749px;top:596px;width:27px;height:15px;border:1px solid;border-color:#808080 #fff #fff #808080"></div>
<div class="t" style="left:751.50px;top:597px;font-family:'Liberation Sans';font-size:11px;color:#808080;line-height:13px;height:13px;transform:scaleX(0.9018);">OVR</div>
<div class="a" style="left:778px;top:596px;width:34px;height:15px;border:1px solid;border-color:#808080 #fff #fff #808080"></div>
<div class="t" style="left:780.50px;top:597px;font-family:'Liberation Sans';font-size:11px;color:#808080;line-height:13px;height:13px;transform:scaleX(0.9328);">READ</div>
<svg style="left:813px;top:597px" width="14" height="14" viewBox="0 0 14 14"><path fill="#ffffff" d="M13 0h1v1h-1zM12 1h1v1h-1zM11 2h1v1h-1zM10 3h1v1h-1zM9 4h1v1h-1zM13 4h1v1h-1zM8 5h1v1h-1zM12 5h1v1h-1zM7 6h1v1h-1zM11 6h1v1h-1zM6 7h1v1h-1zM10 7h1v1h-1zM5 8h1v1h-1zM9 8h1v1h-1zM13 8h1v1h-1zM4 9h1v1h-1zM8 9h1v1h-1zM12 9h1v1h-1zM3 10h1v1h-1zM7 10h1v1h-1zM11 10h1v1h-1zM2 11h1v1h-1zM6 11h1v1h-1zM10 11h1v1h-1zM1 12h1v1h-1zM5 12h1v1h-1zM9 12h1v1h-1zM13 12h1v1h-1zM0 13h1v1h-1zM4 13h1v1h-1zM8 13h1v1h-1zM12 13h1v1h-1z"/><path fill="#808080" d="M13 1h1v1h-1zM12 2h2v1h-2zM11 3h2v1h-2zM10 4h2v1h-2zM9 5h2v1h-2zM13 5h1v1h-1zM8 6h2v1h-2zM12 6h2v1h-2zM7 7h2v1h-2zM11 7h2v1h-2zM6 8h2v1h-2zM10 8h2v1h-2zM5 9h2v1h-2zM9 9h2v1h-2zM13 9h1v1h-1zM4 10h2v1h-2zM8 10h2v1h-2zM12 10h2v1h-2zM3 11h2v1h-2zM7 11h2v1h-2zM11 11h2v1h-2zM2 12h2v1h-2zM6 12h2v1h-2zM10 12h2v1h-2zM1 13h2v1h-2zM5 13h2v1h-2zM9 13h2v1h-2zM13 13h1v1h-1z"/></svg>
</body></html>
